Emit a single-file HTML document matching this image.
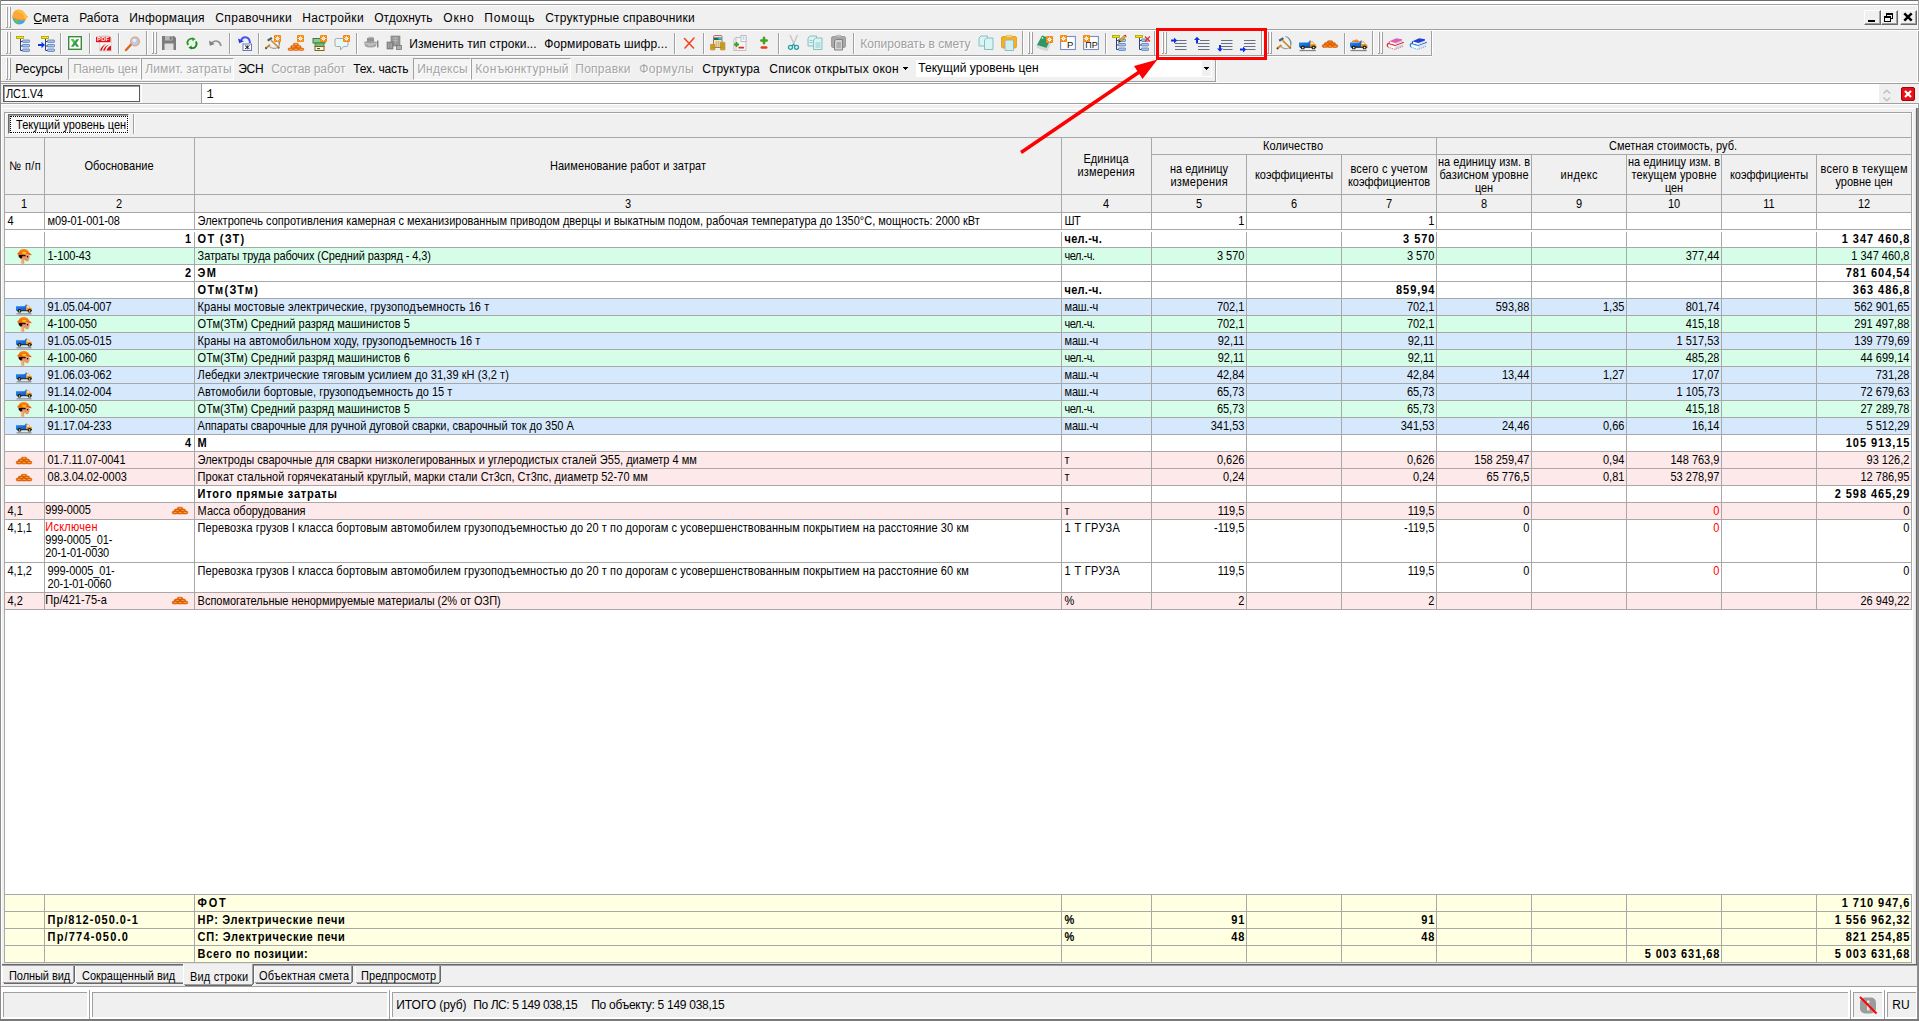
<!DOCTYPE html>
<html><head><meta charset="utf-8"><title>Смета</title>
<style>
html,body{margin:0;padding:0;}
html{overflow:hidden;width:1919px;height:1021px;}
body{width:1919px;height:1021px;overflow:hidden;background:#f0f0f0;position:relative;font-family:'Liberation Sans',sans-serif;}
body>div,body>svg{position:absolute;}
svg{overflow:visible;}
</style></head><body>
<div style="left:0px;top:0px;width:1919px;height:1px;background:#6d6d6d;"></div>
<div style="left:0px;top:1px;width:1919px;height:3px;background:#ffffff;"></div>
<div style="left:0px;top:4px;width:1919px;height:1px;background:#a0a0a0;"></div>
<div style="left:1px;top:5px;width:1917px;height:1px;background:#ffffff;"></div>
<div style="left:1917px;top:5px;width:1px;height:103px;background:#ffffff;"></div>
<div style="left:0px;top:0px;width:1px;height:1021px;background:#8c8c8c;"></div>
<div style="left:1px;top:5px;width:1px;height:1014px;background:#ffffff;"></div>
<div style="left:1918px;top:0px;width:1px;height:1021px;background:#a0a0a0;"></div>
<div style="left:1915px;top:108px;width:1px;height:856px;background:#e3e3e3;"></div>
<div style="left:1916px;top:108px;width:1px;height:858px;background:#696969;"></div>
<div style="left:1917px;top:108px;width:1px;height:912px;background:#909090;"></div>
<div style="left:1918px;top:108px;width:1px;height:912px;background:#888888;"></div>
<div style="left:0px;top:1019px;width:1919px;height:2px;background:#7a7a7a;"></div>
<div style="left:0px;top:29px;width:1919px;height:1px;background:#a0a0a0;"></div>
<div style="left:0px;top:30px;width:1919px;height:1px;background:#ffffff;"></div>
<div style="left:6px;top:7px;width:1px;height:20px;background:#ffffff;"></div>
<div style="left:7px;top:7px;width:1px;height:20px;background:#a0a0a0;"></div>
<div style="left:6px;top:27px;width:2px;height:1px;background:#a0a0a0;"></div>
<div style="left:9px;top:7px;width:1px;height:20px;background:#ffffff;"></div>
<div style="left:10px;top:7px;width:1px;height:20px;background:#a0a0a0;"></div>
<div style="left:9px;top:27px;width:2px;height:1px;background:#a0a0a0;"></div>
<svg style="left:12px;top:9px" width="17" height="17" viewBox="0 0 17 17"><circle cx="7.300" cy="8.700" r="6.700" fill="#40a8e8"/><path d="M2.300 10.500L6.800 11.200 5.800 15.200 3.300 13.800z" fill="#62c44a"/><path d="M.3 8.800C0 4 3 .5 6.500 .5 10.500 .5 13 3.500 13.800 6L16 7.500 13 11.300C9 11.600 4 10.800 .3 8.800z" fill="#f9a93a"/><path d="M3 2.400C5 .8 9 .5 11.500 3 12.500 4.200 13.500 6 13.800 6.800L16 7.500 13.500 10.600 12.300 8C11.300 4.800 8 2 3 2.400z" fill="#fcc636"/><path d="M.6 9C4 10.800 9 11.500 13 11.300L13.300 10.400C9 10.600 4 9.800 .5 8z" fill="#fb8c1c"/></svg>
<div style="top:11.84px;font-size:12px;line-height:12px;white-space:pre;letter-spacing:0.021px;left:33.28px;">Смета</div>
<div style="top:11.84px;font-size:12px;line-height:12px;white-space:pre;letter-spacing:-0.058px;left:79.28px;">Работа</div>
<div style="top:11.84px;font-size:12px;line-height:12px;white-space:pre;letter-spacing:0.204px;left:129.28px;">Информация</div>
<div style="top:11.84px;font-size:12px;line-height:12px;white-space:pre;letter-spacing:0.362px;left:215.28px;">Справочники</div>
<div style="top:11.84px;font-size:12px;line-height:12px;white-space:pre;letter-spacing:0.31px;left:302.28px;">Настройки</div>
<div style="top:11.84px;font-size:12px;line-height:12px;white-space:pre;letter-spacing:-0.005px;left:374.28px;">Отдохнуть</div>
<div style="top:11.84px;font-size:12px;line-height:12px;white-space:pre;letter-spacing:0.81px;left:443.28px;">Окно</div>
<div style="top:11.84px;font-size:12px;line-height:12px;white-space:pre;letter-spacing:0.792px;left:484.28px;">Помощь</div>
<div style="top:11.84px;font-size:12px;line-height:12px;white-space:pre;letter-spacing:0.172px;left:545.28px;">Структурные справочники</div>
<div style="left:34px;top:23px;width:8px;height:1px;background:#000;"></div>
<div style="left:1864px;top:10px;width:17px;height:15px;background:#f0f0f0;box-sizing:border-box;border-top:1px solid #fff;border-left:1px solid #fff;border-right:1px solid #696969;border-bottom:1px solid #696969;"></div>
<div style="left:1865px;top:11px;width:15px;height:13px;background:#f0f0f0;box-sizing:border-box;border-right:1px solid #a0a0a0;border-bottom:1px solid #a0a0a0;"></div>
<svg style="left:1864px;top:10px" width="16" height="14" viewBox="0 0 16 14"><rect x="4" y="10" width="7" height="2" fill="#000"/></svg>
<div style="left:1881px;top:10px;width:17px;height:15px;background:#f0f0f0;box-sizing:border-box;border-top:1px solid #fff;border-left:1px solid #fff;border-right:1px solid #696969;border-bottom:1px solid #696969;"></div>
<div style="left:1882px;top:11px;width:15px;height:13px;background:#f0f0f0;box-sizing:border-box;border-right:1px solid #a0a0a0;border-bottom:1px solid #a0a0a0;"></div>
<svg style="left:1881px;top:10px" width="16" height="14" viewBox="0 0 16 14"><path d="M5 3h7v6h-2v-1h1V5H6v1H5z" fill="#000"/><path d="M3 6h7v6H3zM4 8v3h5V8z" fill="#000" fill-rule="evenodd"/></svg>
<div style="left:1900px;top:10px;width:17px;height:15px;background:#f0f0f0;box-sizing:border-box;border-top:1px solid #fff;border-left:1px solid #fff;border-right:1px solid #696969;border-bottom:1px solid #696969;"></div>
<div style="left:1901px;top:11px;width:15px;height:13px;background:#f0f0f0;box-sizing:border-box;border-right:1px solid #a0a0a0;border-bottom:1px solid #a0a0a0;"></div>
<svg style="left:1900px;top:10px" width="16" height="14" viewBox="0 0 16 14"><path d="M4.300 3.300l7.400 7.400M11.700 3.300l-7.400 7.400" stroke="#000" stroke-width="2.400"/></svg>
<div style="left:0px;top:55px;width:1432px;height:1px;background:#a0a0a0;"></div>
<div style="left:0px;top:56px;width:1432px;height:1px;background:#ffffff;"></div>
<div style="left:6px;top:32px;width:1px;height:21px;background:#ffffff;"></div>
<div style="left:7px;top:32px;width:1px;height:21px;background:#a0a0a0;"></div>
<div style="left:6px;top:53px;width:2px;height:1px;background:#a0a0a0;"></div>
<div style="left:9px;top:32px;width:1px;height:21px;background:#ffffff;"></div>
<div style="left:10px;top:32px;width:1px;height:21px;background:#a0a0a0;"></div>
<div style="left:9px;top:53px;width:2px;height:1px;background:#a0a0a0;"></div>
<svg style="left:16px;top:36px" width="16" height="16" viewBox="0 0 16 16"><g transform="translate(0,0)"><rect x=".5" y=".5" width="7" height="2" fill="#f4e800" stroke="#a8a000" stroke-width=".8"/><path d="M4.500 3v11.500h2.500M4.500 5.500h2.500M4.500 10h2.500" fill="none" stroke="#304078" stroke-width="1"/><rect x="6.500" y="4" width="7" height="2.400" rx=".6" fill="#a8c8f4" stroke="#5878b0" stroke-width=".8"/><rect x="6.500" y="8.5" width="7" height="2.400" rx=".6" fill="#a8c8f4" stroke="#5878b0" stroke-width=".8"/><rect x="6.500" y="13" width="7" height="2.400" rx=".6" fill="#a8c8f4" stroke="#5878b0" stroke-width=".8"/></g></svg>
<svg style="left:38px;top:36px" width="16" height="16" viewBox="0 0 16 16"><g transform="translate(3,0)"><rect x=".5" y=".5" width="7" height="2" fill="#f4e800" stroke="#a8a000" stroke-width=".8"/><path d="M4.500 3v11.500h2.500M4.500 5.500h2.500M4.500 10h2.500" fill="none" stroke="#304078" stroke-width="1"/><rect x="6.500" y="4" width="7" height="2.400" rx=".6" fill="#a8c8f4" stroke="#5878b0" stroke-width=".8"/><rect x="6.500" y="8.5" width="7" height="2.400" rx=".6" fill="#a8c8f4" stroke="#5878b0" stroke-width=".8"/><rect x="6.500" y="13" width="7" height="2.400" rx=".6" fill="#a8c8f4" stroke="#5878b0" stroke-width=".8"/></g><path d="M0 8h3.500V5.800L7 9l-3.500 3.200V10H0z" fill="#0838e8"/></svg>
<div style="left:60px;top:33px;width:1px;height:21px;background:#a0a0a0;"></div>
<div style="left:61px;top:33px;width:1px;height:21px;background:#ffffff;"></div>
<svg style="left:68px;top:36px" width="14" height="14" viewBox="0 0 15 15"><rect x=".75" y=".75" width="13.500" height="13.500" fill="#fff" stroke="#3c8a3c" stroke-width="1.500"/><path d="M3 3.500h3l1.500 2.200L9 3.500h3L9 7.500l3 4H9L7.500 9.300 6 11.500H3l3-4z" fill="#2e9e3e"/><path d="M3 3.500h3l1.500 2.200-1.500 1.800z" fill="#5cc860"/></svg>
<div style="left:89px;top:33px;width:1px;height:21px;background:#a0a0a0;"></div>
<div style="left:90px;top:33px;width:1px;height:21px;background:#ffffff;"></div>
<svg style="left:96px;top:35px" width="16" height="16" viewBox="0 0 16 16"><path d="M3.500 1h9.500l2.500 2.500V16h-12z" fill="#f4f4f4" stroke="#c8c8c8" stroke-width=".6"/><rect x="0" y="1.800" width="14.500" height="5.400" fill="#e81010"/><text x="7.200" y="6.400" font-family="Liberation Sans" font-weight="bold" font-size="5.800" fill="#fff" text-anchor="middle" letter-spacing=".2">PDF</text><path d="M4 15.500c1-3 3-5.500 6-6.500-2.500 2-3.500 4-4 6.500zM7 15.500c1-3 3-5 6-6-2.500 2-3.500 3.500-4 6zM10.500 15.500c.5-2 2-4 4.500-5v5z" fill="#e01010"/></svg>
<div style="left:118px;top:33px;width:1px;height:21px;background:#a0a0a0;"></div>
<div style="left:119px;top:33px;width:1px;height:21px;background:#ffffff;"></div>
<svg style="left:125px;top:36px" width="15" height="15" viewBox="0 0 15 15"><path d="M1 14l5.500-6" stroke="#d86818" stroke-width="2.400" stroke-linecap="round"/><circle cx="10" cy="5.500" r="4.300" fill="#b8ccf0" stroke="#e8a070" stroke-width="1.300"/><circle cx="9.300" cy="4.500" r="1.800" fill="#e8f0ff"/></svg>
<div style="left:146px;top:31px;width:1px;height:24px;background:#a0a0a0;"></div>
<div style="left:147px;top:31px;width:1px;height:24px;background:#ffffff;"></div>
<div style="left:152px;top:32px;width:1px;height:21px;background:#ffffff;"></div>
<div style="left:153px;top:32px;width:1px;height:21px;background:#a0a0a0;"></div>
<div style="left:152px;top:53px;width:2px;height:1px;background:#a0a0a0;"></div>
<div style="left:155px;top:32px;width:1px;height:21px;background:#ffffff;"></div>
<div style="left:156px;top:32px;width:1px;height:21px;background:#a0a0a0;"></div>
<div style="left:155px;top:53px;width:2px;height:1px;background:#a0a0a0;"></div>
<svg style="left:162px;top:36px" width="14" height="14" viewBox="0 0 14 14"><path d="M0 0h12l2 2v12H0z" fill="#7c7c7c"/><rect x="2.500" y="7.500" width="9" height="6.500" fill="#e0e0e0"/><rect x="3" y="0" width="7.500" height="4.500" fill="#b8b8b8"/><rect x="7.800" y=".8" width="1.700" height="2.800" fill="#6c6c6c"/></svg>
<svg style="left:185px;top:37px" width="14" height="13" viewBox="-.5 -1 15.500 17"><path d="M2.300 9.500A5.300 5.300 0 0 1 9 1.700" fill="none" stroke="#1ea01e" stroke-width="2.300"/><path d="M7.500 -.8l4.500 2.300-4 3z" fill="#1ea01e"/><path d="M12.200 5A5.300 5.300 0 0 1 5.500 12.800" fill="none" stroke="#148c14" stroke-width="2.300"/><path d="M7 15.300l-4.500-2.300 4-3z" fill="#148c14"/></svg>
<svg style="left:209px;top:39px" width="13" height="8" viewBox="0 0 13 8"><path d="M2.500 4C6.500 .5 11 2 12 7" fill="none" stroke="#909090" stroke-width="1.600"/><path d="M0 1.500l.8 5.200L5.800 5z" fill="#808080"/></svg>
<div style="left:229px;top:33px;width:1px;height:21px;background:#a0a0a0;"></div>
<div style="left:230px;top:33px;width:1px;height:21px;background:#ffffff;"></div>
<svg style="left:238px;top:35px" width="16" height="16" viewBox="0 0 16 16"><path d="M3 5.500C4.500 1 11.500 .5 12 8" fill="none" stroke="#4858e8" stroke-width="2"/><path d="M0 3.500l1.200 4.800L6 6.300z" fill="#2838e0"/><rect x="5" y="9" width="8.500" height="6.500" fill="#fff" stroke="#6878c0" stroke-width="1"/><path d="M7 10.500l4.500 3.500M11.500 10.500L7 14M9.250 10.300v4" stroke="#101020" stroke-width=".9"/></svg>
<div style="left:258px;top:33px;width:1px;height:21px;background:#a0a0a0;"></div>
<div style="left:259px;top:33px;width:1px;height:21px;background:#ffffff;"></div>
<svg style="left:265px;top:35px" width="16" height="16" viewBox="0 0 16 16"><g transform="translate(-.5,.8)"><path d="M9.500 .4C13 1.500 15.500 5 15 8.500 14.500 11 12 12.800 9 12.600 7 12.400 5.500 11.500 4.500 10.200" fill="none" stroke="#8aa8ac" stroke-width="1.200"/><path d="M12 1.800C14 3.500 15 6 14.600 8.500" fill="none" stroke="#5c7478" stroke-width=".7"/><path d="M1.300 12.500l3.600-3" stroke="#d08828" stroke-width="1.900" stroke-linecap="round"/><path d="M1.200 12.700l.8-.7" stroke="#503010" stroke-width="1.900"/><path d="M6.500 4.400l8 7.700" stroke="#d08828" stroke-width="1.500"/><path d="M13.800 11.500l1 1" stroke="#b06010" stroke-width="1.800"/><path d="M3.200 4.800l4.200-2.700" stroke="#4a6068" stroke-width="2.300"/></g><rect x="9" y="0" width="7" height="7" rx="1" fill="#f08810"/><circle cx="12.500" cy="3.500" r="1.500" fill="#fff"/><path d="M12.500 .8v5.400M9.800 3.500h5.400M10.600 1.600l3.800 3.800M14.400 1.600l-3.800 3.800" stroke="#fff" stroke-width=".7"/><circle cx="12.500" cy="3.500" r=".8" fill="#f8c070"/></svg>
<svg style="left:288px;top:35px" width="16" height="16" viewBox="0 0 16 16"><rect x="5.2" y="8.2" width="5.400" height="2.600" rx="1.300" fill="#f07008" stroke="#c85000" stroke-width=".4"/><rect x="6.7" y="9.1" width="2.600" height=".7" fill="#ffb868"/><rect x="2.6" y="10.6" width="5.400" height="2.600" rx="1.300" fill="#f07008" stroke="#c85000" stroke-width=".4"/><rect x="4.1" y="11.5" width="2.600" height=".7" fill="#ffb868"/><rect x="7.8" y="10.6" width="5.400" height="2.600" rx="1.300" fill="#f07008" stroke="#c85000" stroke-width=".4"/><rect x="9.3" y="11.5" width="2.600" height=".7" fill="#ffb868"/><rect x="0" y="13" width="5.400" height="2.600" rx="1.300" fill="#f07008" stroke="#c85000" stroke-width=".4"/><rect x="1.5" y="13.9" width="2.600" height=".7" fill="#ffb868"/><rect x="5.2" y="13" width="5.400" height="2.600" rx="1.300" fill="#f07008" stroke="#c85000" stroke-width=".4"/><rect x="6.7" y="13.9" width="2.600" height=".7" fill="#ffb868"/><rect x="10.4" y="13" width="5.400" height="2.600" rx="1.300" fill="#f07008" stroke="#c85000" stroke-width=".4"/><rect x="11.9" y="13.9" width="2.600" height=".7" fill="#ffb868"/><rect x="9" y="0" width="7" height="7" rx="1" fill="#f08810"/><circle cx="12.500" cy="3.500" r="1.500" fill="#fff"/><path d="M12.500 .8v5.400M9.800 3.500h5.400M10.600 1.600l3.800 3.800M14.400 1.600l-3.800 3.800" stroke="#fff" stroke-width=".7"/><circle cx="12.500" cy="3.500" r=".8" fill="#f8c070"/></svg>
<svg style="left:311px;top:35px" width="16" height="16" viewBox="0 0 16 16"><rect x="2" y="3.500" width="12" height="4.500" fill="#90c890" stroke="#3c8040" stroke-width="1"/><rect x="4" y="8" width="9" height="3.500" fill="#78b878" stroke="#3c8040" stroke-width=".8"/><rect x="4" y="11.500" width="9" height="4" fill="#fff8d8" stroke="#806020" stroke-width="1"/><rect x="6" y="13" width="3" height="1.200" rx=".6" fill="#206020"/><rect x="9" y="0" width="7" height="7" rx="1" fill="#f08810"/><circle cx="12.500" cy="3.500" r="1.500" fill="#fff"/><path d="M12.500 .8v5.400M9.800 3.500h5.400M10.600 1.600l3.800 3.800M14.400 1.600l-3.800 3.800" stroke="#fff" stroke-width=".7"/><circle cx="12.500" cy="3.500" r=".8" fill="#f8c070"/></svg>
<svg style="left:334px;top:35px" width="16" height="16" viewBox="0 0 16 16"><path d="M2.500 3.500h10a1.500 1.500 0 0 1 1.500 1.500v5a1.500 1.500 0 0 1-1.500 1.500H9.500L6.500 15v-3.500h-4A1.500 1.500 0 0 1 1 10V5a1.500 1.500 0 0 1 1.500-1.500z" fill="#e4f8fc" stroke="#a8a8a8" stroke-width="1"/><rect x="9" y="0" width="7" height="7" rx="1" fill="#f08810"/><circle cx="12.500" cy="3.500" r="1.500" fill="#fff"/><path d="M12.500 .8v5.400M9.800 3.500h5.400M10.600 1.600l3.800 3.800M14.400 1.600l-3.800 3.800" stroke="#fff" stroke-width=".7"/><circle cx="12.500" cy="3.500" r=".8" fill="#f8c070"/></svg>
<div style="left:356px;top:33px;width:1px;height:21px;background:#a0a0a0;"></div>
<div style="left:357px;top:33px;width:1px;height:21px;background:#ffffff;"></div>
<svg style="left:363px;top:35px" width="16" height="16" viewBox="0 0 16 16"><path d="M1 7c2-1.500 10-1.500 13 0l-1 4c-2 2-9 2-11 0z" fill="#a4a4a4"/><rect x="4" y="3" width="7" height="3.500" fill="#909090"/><rect x="5.500" y="1.800" width="5" height="1.500" fill="#b4b4b4"/><path d="M2.500 8.500c2 1 8 1 10 0" stroke="#d8d8d8" stroke-width="1" fill="none"/><rect x="14.300" y="5.500" width="1" height="7" fill="#505050"/><rect x="5" y="9.500" width="5" height="1" fill="#c8c8c8"/></svg>
<svg style="left:386px;top:35px" width="16" height="16" viewBox="0 0 16 16"><rect x="5" y="1" width="9" height="10" fill="#989898" stroke="#787878" stroke-width=".6"/><path d="M7 3h5M9.500 3v5M7.500 5.500h4" stroke="#c0c0c0" stroke-width=".8"/><rect x="1" y="7" width="6" height="7" fill="#8c8c8c" stroke="#707070" stroke-width=".6"/><path d="M2.500 8v5M4 8v5M5.500 8v5" stroke="#b4b4b4" stroke-width=".6"/><rect x="10.500" y="10.500" width="5" height="4" fill="#b0b0b0" stroke="#787878" stroke-width=".8"/></svg>
<div style="top:37.84px;font-size:12px;line-height:12px;white-space:pre;letter-spacing:0.049px;left:409.28px;">Изменить тип строки...</div>
<div style="top:37.84px;font-size:12px;line-height:12px;white-space:pre;letter-spacing:0.107px;left:544.28px;">Формировать шифр...</div>
<div style="left:674px;top:33px;width:1px;height:21px;background:#a0a0a0;"></div>
<div style="left:675px;top:33px;width:1px;height:21px;background:#ffffff;"></div>
<svg style="left:683px;top:37px" width="12" height="12" viewBox="0 0 12 12"><path d="M1.500 1.500l9 9.500M11 1L2 11" stroke="#f04828" stroke-width="1.600" stroke-linecap="round"/></svg>
<div style="left:703px;top:33px;width:1px;height:21px;background:#a0a0a0;"></div>
<div style="left:704px;top:33px;width:1px;height:21px;background:#ffffff;"></div>
<svg style="left:710px;top:35px" width="16" height="16" viewBox="0 0 16 16"><rect x="3.500" y=".5" width="8.500" height="12" rx="1" fill="#f4e8c8" stroke="#b07070" stroke-width="1"/><rect x="4" y="2.500" width="7.500" height="2.500" fill="#186868"/><rect x="8.500" y="3" width="3" height="1.500" fill="#30d0e0"/><path d="M5 7h6M5 9h6M5 11h6M6.500 6v6M8.500 6v6" stroke="#c8a860" stroke-width=".6"/><g fill="#e8b820" stroke="#906800" stroke-width=".5"><rect x=".3" y="9.300" width="4.800" height="1.800" rx=".8"/><rect x=".3" y="11.200" width="4.800" height="1.800" rx=".8"/><rect x=".3" y="13.100" width="4.800" height="1.800" rx=".8"/><rect x="10.300" y="7.400" width="4.800" height="1.800" rx=".8"/><rect x="10.300" y="9.300" width="4.800" height="1.800" rx=".8"/><rect x="10.300" y="11.200" width="4.800" height="1.800" rx=".8"/><rect x="10.300" y="13.100" width="4.800" height="1.800" rx=".8"/></g></svg>
<svg style="left:733px;top:35px" width="16" height="16" viewBox="0 0 16 16"><path d="M3 2.500h5v13H.8V5z" fill="#f4f4f4" stroke="#b8b8b8" stroke-width=".8"/><rect x="3" y="2.500" width="10" height="13" fill="#f4f4f4" stroke="#b8b8b8" stroke-width=".8"/><rect x="8" y=".5" width="5" height="6" fill="#fff" stroke="#b0b0b0" stroke-width=".8"/><path d="M9.500 2.200h2M9.500 4h2" stroke="#80a0f0" stroke-width=".8"/><path d="M1 9.500h5M3.500 7v5" stroke="#38a028" stroke-width="1.800"/><rect x="5.500" y="11.800" width="5.500" height="1.800" rx=".5" fill="#e82818"/></svg>
<svg style="left:759px;top:36px" width="10" height="14" viewBox="0 0 10 14"><path d="M2.300 4.500h5.400M5 1.800v5.400" stroke="#48a020" stroke-width="2.600" stroke-linecap="round"/><rect x="1.500" y="10.200" width="7" height="2.600" rx="1.300" fill="#f03818"/></svg>
<div style="left:778px;top:33px;width:1px;height:21px;background:#a0a0a0;"></div>
<div style="left:779px;top:33px;width:1px;height:21px;background:#ffffff;"></div>
<svg style="left:786px;top:35px" width="15" height="15" viewBox="0 0 15 15"><path d="M4 0l4.500 10M11.500 0L7 10" stroke="#c0c4c4" stroke-width="1.300"/><circle cx="4.500" cy="12.300" r="2" fill="none" stroke="#20a0a8" stroke-width="1.300"/><circle cx="10.500" cy="12.300" r="2" fill="none" stroke="#20a0a8" stroke-width="1.300"/><path d="M6 10.800l1.500-1.500 1.500 1.500" stroke="#20a0a8" stroke-width="1.200" fill="none"/></svg>
<svg style="left:807px;top:35px" width="16" height="16" viewBox="0 0 16 16"><path d="M1 3l2-2h6.500v10H1z" fill="#d8f4f4" stroke="#88c0c0" stroke-width="1"/><path d="M6.500 5l2-2h6.500v11.500H6.500z" fill="#d8f4f4" stroke="#88c0c0" stroke-width="1"/><path d="M8.500 8h5M8.500 10h5M8.500 12h5M2.500 5.500h3M2.500 7.500h3" stroke="#88c0c0" stroke-width=".8"/></svg>
<svg style="left:831px;top:35px" width="16" height="16" viewBox="0 0 16 16"><rect x=".5" y="1.500" width="14" height="11" rx="1.500" fill="#a8a8a8" stroke="#909090" stroke-width=".8"/><rect x="5" y=".3" width="5" height="2" rx=".8" fill="#c8c8c8" stroke="#909090" stroke-width=".5"/><path d="M3.500 6l1.500-1.500h6.500v10.500H3.500z" fill="#d4d4d4" stroke="#787878" stroke-width=".9"/><path d="M5.500 8h4.500M5.500 10h4.500M5.500 12h4.500" stroke="#787878" stroke-width=".8"/></svg>
<div style="left:853px;top:33px;width:1px;height:21px;background:#a0a0a0;"></div>
<div style="left:854px;top:33px;width:1px;height:21px;background:#ffffff;"></div>
<div style="top:37.84px;font-size:12px;line-height:12px;white-space:pre;color:#a0a0a0;letter-spacing:0.03px;left:860.28px;text-shadow:1px 1px 0 #fff;">Копировать в смету</div>
<svg style="left:978px;top:35px" width="16" height="16" viewBox="0 0 16 16"><path d="M1 3l2-2h6.500v10H1z" fill="#d8f4f4" stroke="#88c0c0" stroke-width="1"/><path d="M6.500 5l2-2h6.500v11.500H6.500z" fill="#d8f4f4" stroke="#88c0c0" stroke-width="1"/></svg>
<svg style="left:1001px;top:35px" width="16" height="16" viewBox="0 0 16 16"><rect x=".5" y="1.500" width="15" height="11.500" rx="1.500" fill="#f8b020" stroke="#e09818" stroke-width=".8"/><rect x="5" y=".3" width="6" height="2" rx=".9" fill="#f8e078" stroke="#d8a828" stroke-width=".5"/><path d="M4 6.500l1.500-1.500h7v10.500H4z" fill="#d0eef0" stroke="#88b8c0" stroke-width=".9"/></svg>
<div style="left:1022px;top:31px;width:1px;height:24px;background:#a0a0a0;"></div>
<div style="left:1023px;top:31px;width:1px;height:24px;background:#ffffff;"></div>
<div style="left:1028px;top:32px;width:1px;height:21px;background:#ffffff;"></div>
<div style="left:1029px;top:32px;width:1px;height:21px;background:#a0a0a0;"></div>
<div style="left:1028px;top:53px;width:2px;height:1px;background:#a0a0a0;"></div>
<div style="left:1031px;top:32px;width:1px;height:21px;background:#ffffff;"></div>
<div style="left:1032px;top:32px;width:1px;height:21px;background:#a0a0a0;"></div>
<div style="left:1031px;top:53px;width:2px;height:1px;background:#a0a0a0;"></div>
<svg style="left:1037px;top:35px" width="16" height="16" viewBox="0 0 16 16"><path d="M0 10l5-9.500 9 3-4.500 9.500z" fill="#2e9860"/><path d="M0 10l9.500 3 4.500-9.500" fill="none" stroke="#207848" stroke-width=".6"/><path d="M0 10l.3 2.500 9.700 3.300 4.500-9.300-.5-3-4.500 9.500z" fill="#d4dce0" stroke="#a8b8c0" stroke-width=".4"/><circle cx="5.500" cy="3" r=".9" fill="#c0f0d0"/><g transform="translate(0,1)"><rect x="9" y="0" width="7" height="7" rx="1" fill="#f08810"/><circle cx="12.500" cy="3.500" r="1.500" fill="#fff"/><path d="M12.500 .8v5.400M9.800 3.500h5.400M10.600 1.600l3.800 3.800M14.400 1.600l-3.800 3.800" stroke="#fff" stroke-width=".7"/><circle cx="12.500" cy="3.500" r=".8" fill="#f8c070"/></g></svg>
<svg style="left:1060px;top:35px" width="16" height="16" viewBox="0 0 16 16"><rect x=".6" y="1.500" width="14.800" height="13" fill="#fff" stroke="#7890c0" stroke-width="1.100"/><text x="7" y="13" font-family="Liberation Sans" font-size="9.5" fill="#101010">P</text><g transform="translate(-9,0)"><rect x="9" y="0" width="7" height="7" rx="1" fill="#f08810"/><circle cx="12.500" cy="3.500" r="1.500" fill="#fff"/><path d="M12.500 .8v5.400M9.800 3.500h5.400M10.600 1.600l3.800 3.800M14.400 1.600l-3.800 3.800" stroke="#fff" stroke-width=".7"/><circle cx="12.500" cy="3.500" r=".8" fill="#f8c070"/></g></svg>
<svg style="left:1083px;top:35px" width="16" height="16" viewBox="0 0 16 16"><rect x=".6" y="1.500" width="14.800" height="13" fill="#fff" stroke="#7890c0" stroke-width="1.100"/><text x="2.3" y="13" font-family="Liberation Sans" font-size="9" fill="#101010">ПР</text><g transform="translate(-9,0)"><rect x="9" y="0" width="7" height="7" rx="1" fill="#f08810"/><circle cx="12.500" cy="3.500" r="1.500" fill="#fff"/><path d="M12.500 .8v5.400M9.800 3.500h5.400M10.600 1.600l3.800 3.800M14.400 1.600l-3.800 3.800" stroke="#fff" stroke-width=".7"/><circle cx="12.500" cy="3.500" r=".8" fill="#f8c070"/></g></svg>
<div style="left:1105px;top:33px;width:1px;height:21px;background:#a0a0a0;"></div>
<div style="left:1106px;top:33px;width:1px;height:21px;background:#ffffff;"></div>
<svg style="left:1112px;top:35px" width="16" height="16" viewBox="0 0 16 16"><g transform="translate(0,0)"><rect x=".5" y=".5" width="7" height="2" fill="#f4e800" stroke="#a8a000" stroke-width=".8"/><path d="M4.500 3v11.500h2.500M4.500 5.500h2.500M4.500 10h2.500" fill="none" stroke="#304078" stroke-width="1"/><rect x="6.500" y="4" width="7" height="2.400" rx=".6" fill="#a8c8f4" stroke="#5878b0" stroke-width=".8"/><rect x="6.500" y="8.5" width="7" height="2.400" rx=".6" fill="#a8c8f4" stroke="#5878b0" stroke-width=".8"/><rect x="6.500" y="13" width="7" height="2.400" rx=".6" fill="#a8c8f4" stroke="#5878b0" stroke-width=".8"/></g><path d="M6.500 7.500l1-2.500 5-5 1.500 1.500-5 5z" fill="#f0b030" stroke="#604010" stroke-width=".5"/><path d="M12.300.2l1.500 1.500 .8-.8-1.500-1.500z" fill="#e02020"/><path d="M6.500 7.500l1-2.400 1.400 1.400z" fill="#202020"/></svg>
<svg style="left:1135px;top:35px" width="16" height="16" viewBox="0 0 16 16"><g transform="translate(0,0)"><rect x=".5" y=".5" width="7" height="2" fill="#f4e800" stroke="#a8a000" stroke-width=".8"/><path d="M4.500 3v11.500h2.500M4.500 5.500h2.500M4.500 10h2.500" fill="none" stroke="#304078" stroke-width="1"/><rect x="6.500" y="4" width="7" height="2.400" rx=".6" fill="#a8c8f4" stroke="#5878b0" stroke-width=".8"/><rect x="6.500" y="8.5" width="7" height="2.400" rx=".6" fill="#a8c8f4" stroke="#5878b0" stroke-width=".8"/><rect x="6.500" y="13" width="7" height="2.400" rx=".6" fill="#a8c8f4" stroke="#5878b0" stroke-width=".8"/></g><path d="M10 1.500l5 5M15 1.500l-5 5" stroke="#e83030" stroke-width="1.300"/></svg>
<div style="left:1154px;top:31px;width:1px;height:24px;background:#a0a0a0;"></div>
<div style="left:1155px;top:31px;width:1px;height:24px;background:#ffffff;"></div>
<div style="left:1162px;top:32px;width:1px;height:21px;background:#ffffff;"></div>
<div style="left:1163px;top:32px;width:1px;height:21px;background:#a0a0a0;"></div>
<div style="left:1162px;top:53px;width:2px;height:1px;background:#a0a0a0;"></div>
<div style="left:1165px;top:32px;width:1px;height:21px;background:#ffffff;"></div>
<div style="left:1166px;top:32px;width:1px;height:21px;background:#a0a0a0;"></div>
<div style="left:1165px;top:53px;width:2px;height:1px;background:#a0a0a0;"></div>
<svg style="left:1170px;top:36px" width="17" height="16" viewBox="0 0 17 16"><path d="M7 4.500h9.500M5 7.500h11.5M5 10.500h11.5M5 13.500h11.5" stroke="#687088" stroke-width="1" fill="none"/><path d="M1 3.500h3V1.500L7.200 4.500 4 7.500v-2H1z" fill="#1030e0"/></svg>
<svg style="left:1193px;top:36px" width="17" height="16" viewBox="0 0 17 16"><path d="M7 4.500h9.500M5 7.500h11.5M5 10.500h11.5M5 13.500h11.5" stroke="#687088" stroke-width="1" fill="none"/><path d="M3 7.500V4H1L4 .800 7 4H5v3.500z" fill="#1030e0"/></svg>
<svg style="left:1216px;top:36px" width="17" height="16" viewBox="0 0 17 16"><path d="M5 4.500h11.5M5 7.500h11.5M5 10.500h11.5M7 13.500h9.500" stroke="#687088" stroke-width="1" fill="none"/><path d="M3 9v3.500H1L4 15.700 7 12.500H5V9z" fill="#1030e0"/></svg>
<svg style="left:1239px;top:36px" width="17" height="16" viewBox="0 0 17 16"><path d="M5 4.500h11.5M5 7.500h11.5M5 10.500h11.5M7 13.500h9.500" stroke="#687088" stroke-width="1" fill="none"/><path d="M1 12.500h3v-2l3.200 3-3.200 3v-2H1z" fill="#1030e0"/></svg>
<div style="left:1261px;top:31px;width:1px;height:24px;background:#a0a0a0;"></div>
<div style="left:1262px;top:31px;width:1px;height:24px;background:#ffffff;"></div>
<div style="left:1267px;top:32px;width:1px;height:21px;background:#ffffff;"></div>
<div style="left:1268px;top:32px;width:1px;height:21px;background:#a0a0a0;"></div>
<div style="left:1267px;top:53px;width:2px;height:1px;background:#a0a0a0;"></div>
<div style="left:1270px;top:32px;width:1px;height:21px;background:#ffffff;"></div>
<div style="left:1271px;top:32px;width:1px;height:21px;background:#a0a0a0;"></div>
<div style="left:1270px;top:53px;width:2px;height:1px;background:#a0a0a0;"></div>
<svg style="left:1276px;top:36px" width="16" height="16" viewBox="0 0 16 16"><path d="M9.500 .4C13 1.500 15.500 5 15 8.500 14.500 11 12 12.800 9 12.600 7 12.400 5.500 11.500 4.500 10.200" fill="none" stroke="#8aa8ac" stroke-width="1.200"/><path d="M12 1.800C14 3.500 15 6 14.600 8.500" fill="none" stroke="#5c7478" stroke-width=".7"/><path d="M1.300 12.500l3.600-3" stroke="#d08828" stroke-width="1.900" stroke-linecap="round"/><path d="M1.200 12.700l.8-.7" stroke="#503010" stroke-width="1.900"/><path d="M6.500 4.400l8 7.700" stroke="#d08828" stroke-width="1.500"/><path d="M13.800 11.500l1 1" stroke="#b06010" stroke-width="1.800"/><path d="M3.200 4.800l4.200-2.700" stroke="#4a6068" stroke-width="2.300"/></svg>
<svg style="left:1299px;top:36px" width="17" height="16" viewBox="0 0 17 16"><g transform="translate(0,4) scale(1.08)"><defs><linearGradient id="tb2" x1="0" y1="0" x2="1" y2="1"><stop offset="0" stop-color="#2a8cf0"/><stop offset="1" stop-color="#0c56c8"/></linearGradient></defs><path d="M0 2.200h8.500L10 .4l1.200.3-.9 1.700v4.400H0z" fill="url(#tb2)"/><path d="M10.300 1.500h2.600l1.500 2.300 1.600.6v2.400h-5.700z" fill="#f0901c"/><path d="M11.100 2.300h1.700l.9 1.400h-2.600z" fill="#e8ffff"/><rect x="1" y="6.200" width="15" height="1" fill="#202020"/><circle cx="3.500" cy="7" r="1.900" fill="#181818"/><circle cx="3.500" cy="7" r=".8" fill="#f0e878"/><circle cx="13.500" cy="7" r="1.900" fill="#181818"/><circle cx="13.500" cy="7" r=".8" fill="#f0e878"/><rect x="2" y="8.500" width="3" height="1" fill="#c0c4c8"/><rect x="12" y="8.500" width="3" height="1" fill="#c0c4c8"/><rect x=".5" y="9.500" width="15" height=".8" fill="#606060"/></g></svg>
<svg style="left:1322px;top:35px" width="16" height="16" viewBox="0 0 16 16"><g transform="translate(0,5.500)"><rect x="5.2" y="0.2" width="5.600" height="2.900" rx="1.400" fill="#ee6a00" stroke="#c04c00" stroke-width=".5"/><rect x="6.800000000000001" y="1.3" width="3" height=".8" rx=".4" fill="#ffb050"/><rect x="2.3" y="2.1" width="5.600" height="2.900" rx="1.400" fill="#ee6a00" stroke="#c04c00" stroke-width=".5"/><rect x="3.9" y="3.2" width="3" height=".8" rx=".4" fill="#ffb050"/><rect x="7.9" y="2.1" width="5.600" height="2.900" rx="1.400" fill="#ee6a00" stroke="#c04c00" stroke-width=".5"/><rect x="9.5" y="3.2" width="3" height=".8" rx=".4" fill="#ffb050"/><rect x="0.2" y="4.1" width="5.600" height="2.900" rx="1.400" fill="#ee6a00" stroke="#c04c00" stroke-width=".5"/><rect x="1.8" y="5.199999999999999" width="3" height=".8" rx=".4" fill="#ffb050"/><rect x="5.2" y="4.1" width="5.600" height="2.900" rx="1.400" fill="#ee6a00" stroke="#c04c00" stroke-width=".5"/><rect x="6.800000000000001" y="5.199999999999999" width="3" height=".8" rx=".4" fill="#ffb050"/><rect x="10.2" y="4.1" width="5.600" height="2.900" rx="1.400" fill="#ee6a00" stroke="#c04c00" stroke-width=".5"/><rect x="11.799999999999999" y="5.199999999999999" width="3" height=".8" rx=".4" fill="#ffb050"/></g></svg>
<div style="left:1344px;top:33px;width:1px;height:21px;background:#a0a0a0;"></div>
<div style="left:1345px;top:33px;width:1px;height:21px;background:#ffffff;"></div>
<svg style="left:1350px;top:36px" width="17" height="16" viewBox="0 0 17 16"><g transform="translate(0,4) scale(1.08)"><defs><linearGradient id="tb3" x1="0" y1="0" x2="1" y2="1"><stop offset="0" stop-color="#2a8cf0"/><stop offset="1" stop-color="#0c56c8"/></linearGradient></defs><path d="M0 2.200h8.500L10 .4l1.200.3-.9 1.700v4.400H0z" fill="url(#tb3)"/><path d="M10.300 1.500h2.600l1.500 2.300 1.600.6v2.400h-5.700z" fill="#f0901c"/><path d="M11.100 2.300h1.700l.9 1.400h-2.600z" fill="#e8ffff"/><rect x="1" y="6.200" width="15" height="1" fill="#202020"/><circle cx="3.500" cy="7" r="1.900" fill="#181818"/><circle cx="3.500" cy="7" r=".8" fill="#f0e878"/><circle cx="13.500" cy="7" r="1.900" fill="#181818"/><circle cx="13.500" cy="7" r=".8" fill="#f0e878"/><rect x="2" y="8.500" width="3" height="1" fill="#c0c4c8"/><rect x="12" y="8.500" width="3" height="1" fill="#c0c4c8"/><rect x=".5" y="9.500" width="15" height=".8" fill="#606060"/></g><path d="M1.500 6c1-2 6-3 8.500 0z" fill="#e87818"/><circle cx="4" cy="4.800" r="1" fill="#f8a040"/><circle cx="6.500" cy="4.300" r="1" fill="#f09030"/></svg>
<div style="left:1372px;top:31px;width:1px;height:24px;background:#a0a0a0;"></div>
<div style="left:1373px;top:31px;width:1px;height:24px;background:#ffffff;"></div>
<div style="left:1378px;top:32px;width:1px;height:21px;background:#ffffff;"></div>
<div style="left:1379px;top:32px;width:1px;height:21px;background:#a0a0a0;"></div>
<div style="left:1378px;top:53px;width:2px;height:1px;background:#a0a0a0;"></div>
<div style="left:1381px;top:32px;width:1px;height:21px;background:#ffffff;"></div>
<div style="left:1382px;top:32px;width:1px;height:21px;background:#a0a0a0;"></div>
<div style="left:1381px;top:53px;width:2px;height:1px;background:#a0a0a0;"></div>
<svg style="left:1387px;top:38px" width="17" height="12" viewBox="0 0 17 12"><path d="M1 6.800L8 9l8.200-3v2L8 11 1 8.800z" fill="#fff"/><path d="M8 9l8.200-3v2L8 11z" fill="#c8d8e8"/><path d="M1 9.200L8 11.400l8.200-3.100" fill="none" stroke="#f07070" stroke-width="1" stroke-dasharray="1.300 .8"/><path d="M.7 8.600C0 7 .3 5.600 1.500 5.400L8 7.400l8.300-3" fill="none" stroke="#e83030" stroke-width="1.300" stroke-linecap="round"/><path d="M3 3.500L8.300 5l6.700-2.500v1.800L8.300 6.800 3 5.200z" fill="#fff"/><path d="M8.300 5l6.700-2.500v1.800L8.300 6.800z" fill="#c8d8e8"/><path d="M1.900 3.600L9.200.2 15 1.200v1.300L8.300 5 3 3.500v1.700l-1.100-.3z" fill="#e060b0"/></svg>
<svg style="left:1410px;top:38px" width="17" height="12" viewBox="0 0 17 12"><path d="M1 6.800L8 9l8.200-3v2L8 11 1 8.800z" fill="#fff"/><path d="M8 9l8.200-3v2L8 11z" fill="#f0d8e0"/><path d="M1 9.200L8 11.400l8.200-3.100" fill="none" stroke="#60b8f0" stroke-width="1" stroke-dasharray="1.300 .8"/><path d="M.7 8.600C0 7 .3 5.600 1.500 5.400L8 7.400l8.300-3" fill="none" stroke="#1090e0" stroke-width="1.300" stroke-linecap="round"/><path d="M3 3.500L8.300 5l6.700-2.500v1.800L8.300 6.800 3 5.200z" fill="#fff"/><path d="M8.300 5l6.700-2.500v1.800L8.300 6.800z" fill="#f0d8e0"/><path d="M1.900 3.600L9.200.2 15 1.200v1.300L8.300 5 3 3.500v1.700l-1.100-.3z" fill="#2040d0"/></svg>
<div style="left:1431px;top:31px;width:1px;height:24px;background:#a0a0a0;"></div>
<div style="left:1432px;top:31px;width:1px;height:24px;background:#ffffff;"></div>
<div style="left:0px;top:81px;width:1216px;height:1px;background:#a0a0a0;"></div>
<div style="left:0px;top:82px;width:1919px;height:1px;background:#ffffff;"></div>
<div style="left:6px;top:58px;width:1px;height:21px;background:#ffffff;"></div>
<div style="left:7px;top:58px;width:1px;height:21px;background:#a0a0a0;"></div>
<div style="left:6px;top:79px;width:2px;height:1px;background:#a0a0a0;"></div>
<div style="left:9px;top:58px;width:1px;height:21px;background:#ffffff;"></div>
<div style="left:10px;top:58px;width:1px;height:21px;background:#a0a0a0;"></div>
<div style="left:9px;top:79px;width:2px;height:1px;background:#a0a0a0;"></div>
<div style="top:62.84px;font-size:12px;line-height:12px;white-space:pre;letter-spacing:-0.001px;left:15.28px;">Ресурсы</div>
<div style="left:68px;top:58px;width:73px;height:22px;background:#f4f4f4;box-sizing:border-box;border-top:1px solid #a0a0a0;border-left:1px solid #a0a0a0;border-right:1px solid #fff;border-bottom:1px solid #fff;"></div>
<div style="top:62.84px;font-size:12px;line-height:12px;white-space:pre;color:#a4a4a4;letter-spacing:-0.056px;left:73.28px;text-shadow:1px 1px 0 #fff;">Панель цен</div>
<div style="left:141px;top:58px;width:93px;height:22px;background:#f4f4f4;box-sizing:border-box;border-top:1px solid #a0a0a0;border-left:1px solid #a0a0a0;border-right:1px solid #fff;border-bottom:1px solid #fff;"></div>
<div style="top:62.84px;font-size:12px;line-height:12px;white-space:pre;color:#a4a4a4;letter-spacing:0.103px;left:145.28px;text-shadow:1px 1px 0 #fff;">Лимит. затраты</div>
<div style="top:62.84px;font-size:12px;line-height:12px;white-space:pre;letter-spacing:-0.324px;left:238.28px;">ЭСН</div>
<div style="top:62.84px;font-size:12px;line-height:12px;white-space:pre;color:#a4a4a4;letter-spacing:-0.082px;left:271.28px;text-shadow:1px 1px 0 #fff;">Состав работ</div>
<div style="top:62.84px;font-size:12px;line-height:12px;white-space:pre;letter-spacing:-0.122px;left:353.28px;">Тех. часть</div>
<div style="left:413px;top:58px;width:58px;height:22px;background:#f4f4f4;box-sizing:border-box;border-top:1px solid #a0a0a0;border-left:1px solid #a0a0a0;border-right:1px solid #fff;border-bottom:1px solid #fff;"></div>
<div style="top:62.84px;font-size:12px;line-height:12px;white-space:pre;color:#a4a4a4;letter-spacing:0.23px;left:417.28px;text-shadow:1px 1px 0 #fff;">Индексы</div>
<div style="left:471px;top:58px;width:100px;height:22px;background:#f4f4f4;box-sizing:border-box;border-top:1px solid #a0a0a0;border-left:1px solid #a0a0a0;border-right:1px solid #fff;border-bottom:1px solid #fff;"></div>
<div style="top:62.84px;font-size:12px;line-height:12px;white-space:pre;color:#a4a4a4;letter-spacing:0.365px;left:475.28px;text-shadow:1px 1px 0 #fff;">Конъюнктурный</div>
<div style="top:62.84px;font-size:12px;line-height:12px;white-space:pre;color:#a4a4a4;letter-spacing:0.262px;left:575.28px;text-shadow:1px 1px 0 #fff;">Поправки</div>
<div style="top:62.84px;font-size:12px;line-height:12px;white-space:pre;color:#a4a4a4;letter-spacing:0.35px;left:639.28px;text-shadow:1px 1px 0 #fff;">Формулы</div>
<div style="top:62.84px;font-size:12px;line-height:12px;white-space:pre;letter-spacing:0.048px;left:702.28px;">Структура</div>
<div style="top:62.84px;font-size:12px;line-height:12px;white-space:pre;letter-spacing:0.252px;left:769.28px;">Список открытых окон</div>
<svg style="left:903px;top:67px" width="5" height="3" viewBox="0 0 5 3"><path d="M0 0h5v1h-1v1h-1v1h-1v-1h-1v-1h-1z" fill="#000"/></svg>
<div style="left:916px;top:60px;width:296px;height:17px;background:#fff;"></div>
<div style="left:1202px;top:61px;width:9px;height:15px;background:#f0f0f0;"></div>
<div style="top:61.84px;font-size:12px;line-height:12px;white-space:pre;letter-spacing:0.033px;left:918.28px;">Текущий уровень цен</div>
<svg style="left:1204px;top:67px" width="5" height="3" viewBox="0 0 5 3"><path d="M0 0h5v1h-1v1h-1v1h-1v-1h-1v-1h-1z" fill="#000"/></svg>
<div style="left:1215px;top:57px;width:1px;height:24px;background:#a0a0a0;"></div>
<div style="left:1216px;top:57px;width:1px;height:24px;background:#ffffff;"></div>
<div style="left:0px;top:83px;width:1919px;height:1px;background:#a0a0a0;"></div>
<div style="left:0px;top:84px;width:1919px;height:19px;background:#fff;"></div>
<div style="left:0px;top:103px;width:1919px;height:1px;background:#a0a0a0;"></div>
<div style="left:1px;top:84px;width:201px;height:19px;background:#f0f0f0;"></div>
<div style="left:3px;top:85px;width:137px;height:17px;background:#fff;box-sizing:border-box;border:1px solid #5c5c5c;"></div>
<div style="left:4px;top:86px;width:135px;height:15px;background:transparent;box-sizing:border-box;border-top:1px solid #9c9c9c;border-left:1px solid #9c9c9c;"></div>
<div style="top:88.48px;font-size:11px;line-height:11px;white-space:pre;transform:scaleY(1.13);transform-origin:0 0;letter-spacing:-0.117px;left:6.00px;">ЛС1.V4</div>
<div style="left:141px;top:84px;width:1px;height:19px;background:#ffffff;"></div>
<div style="left:201px;top:84px;width:1px;height:19px;background:#a0a0a0;"></div>
<div style="left:206.5px;top:88.5px;font-family:'Liberation Mono',monospace;font-size:12px;line-height:12px;color:#000">1</div>
<div style="left:1879px;top:84px;width:40px;height:19px;background:#f0f0f0;"></div>
<svg style="left:1883px;top:88px" width="8" height="15" viewBox="0 0 8 15"><path d="M.5 5.500l3.300-3.300 3.300 3.300M.5 9.500l3.300 3.300 3.300-3.300" fill="none" stroke="#c0c0c0" stroke-width="1.500"/></svg>
<div style="left:1901px;top:87px;width:14px;height:14px;background:#e81018;border-radius:2px;box-sizing:border-box;border:1px solid #a80008;"></div>
<svg style="left:1901px;top:87px" width="14" height="14" viewBox="0 0 14 14"><path d="M4 4l6 6M10 4l-6 6" stroke="#fff" stroke-width="2.200"/></svg>
<div style="left:1px;top:104px;width:1917px;height:1px;background:#ffffff;"></div>
<div style="left:2px;top:108px;width:1914px;height:1px;background:#ffffff;"></div>
<div style="left:4px;top:112px;width:1908px;height:1px;background:#a0a0a0;"></div>
<div style="left:5px;top:113px;width:1906px;height:1px;background:#ffffff;"></div>
<div style="left:4px;top:112px;width:1px;height:26px;background:#a0a0a0;"></div>
<div style="left:5px;top:113px;width:1px;height:24px;background:#ffffff;"></div>
<div style="left:1912px;top:112px;width:1px;height:26px;background:#ffffff;"></div>
<div style="left:1911px;top:112px;width:1px;height:26px;background:#a0a0a0;"></div>
<div style="left:8px;top:114px;width:121px;height:20px;background:#f8f8f8;box-sizing:border-box;border-top:1px solid #696969;border-left:1px solid #696969;border-right:1px solid #fff;border-bottom:1px solid #fff;"></div>
<div style="left:9px;top:115px;width:119px;height:18px;background:#f8f8f8;box-sizing:border-box;border-top:1px solid #a0a0a0;border-left:1px solid #a0a0a0;"></div>
<div style="left:10px;top:116px;width:118px;height:17px;background:transparent;box-sizing:border-box;border:1px dotted #000;"></div>
<div style="top:119.48px;font-size:11px;line-height:11px;white-space:pre;transform:scaleY(1.13);transform-origin:0 0;letter-spacing:0.026px;left:16.00px;">Текущий уровень цен</div>
<div style="left:133px;top:114px;width:1px;height:20px;background:#a0a0a0;"></div>
<div style="left:134px;top:114px;width:1px;height:20px;background:#ffffff;"></div>
<div style="left:5px;top:138px;width:1908px;height:825px;background:#fff;"></div>
<div style="left:5px;top:138px;width:1906px;height:74px;background:#f0f0f0;"></div>
<div style="left:4px;top:137px;width:1908px;height:1px;background:#a8a8a8;"></div>
<div style="left:1151px;top:154px;width:760px;height:1px;background:#a8a8a8;"></div>
<div style="left:4px;top:194px;width:1908px;height:1px;background:#a8a8a8;"></div>
<div style="left:4px;top:212px;width:1908px;height:1px;background:#a8a8a8;"></div>
<div style="left:4px;top:137px;width:1px;height:826px;background:#a8a8a8;"></div>
<div style="left:44px;top:138px;width:1px;height:75px;background:#a8a8a8;"></div>
<div style="left:194px;top:138px;width:1px;height:75px;background:#a8a8a8;"></div>
<div style="left:1061px;top:138px;width:1px;height:75px;background:#a8a8a8;"></div>
<div style="left:1151px;top:138px;width:1px;height:75px;background:#a8a8a8;"></div>
<div style="left:1246px;top:155px;width:1px;height:58px;background:#a8a8a8;"></div>
<div style="left:1341px;top:155px;width:1px;height:58px;background:#a8a8a8;"></div>
<div style="left:1436px;top:138px;width:1px;height:75px;background:#a8a8a8;"></div>
<div style="left:1531px;top:155px;width:1px;height:58px;background:#a8a8a8;"></div>
<div style="left:1626px;top:155px;width:1px;height:58px;background:#a8a8a8;"></div>
<div style="left:1721px;top:155px;width:1px;height:58px;background:#a8a8a8;"></div>
<div style="left:1816px;top:155px;width:1px;height:58px;background:#a8a8a8;"></div>
<div style="left:1911px;top:138px;width:1px;height:75px;background:#a8a8a8;"></div>
<div style="top:160.48px;font-size:11px;line-height:11px;white-space:pre;transform:scaleY(1.13);transform-origin:0 0;letter-spacing:0.47px;left:2.23px;width:46px;text-align:center;">№ п/п</div>
<div style="top:160.48px;font-size:11px;line-height:11px;white-space:pre;transform:scaleY(1.13);transform-origin:0 0;letter-spacing:0.037px;left:2.02px;width:234px;text-align:center;">Обоснование</div>
<div style="top:160.48px;font-size:11px;line-height:11px;white-space:pre;transform:scaleY(1.13);transform-origin:0 0;letter-spacing:0.084px;left:328.04px;width:600px;text-align:center;">Наименование работ и затрат</div>
<div style="top:153.48px;font-size:11px;line-height:11px;white-space:pre;transform:scaleY(1.13);transform-origin:0 0;letter-spacing:0.111px;left:806.06px;width:600px;text-align:center;">Единица</div>
<div style="top:166.48px;font-size:11px;line-height:11px;white-space:pre;transform:scaleY(1.13);transform-origin:0 0;letter-spacing:0.241px;left:806.12px;width:600px;text-align:center;">измерения</div>
<div style="top:140.48px;font-size:11px;line-height:11px;white-space:pre;transform:scaleY(1.13);transform-origin:0 0;letter-spacing:0.126px;left:993.06px;width:600px;text-align:center;">Количество</div>
<div style="top:140.48px;font-size:11px;line-height:11px;white-space:pre;transform:scaleY(1.13);transform-origin:0 0;letter-spacing:0.045px;left:1429.02px;width:488px;text-align:center;">Сметная стоимость, руб.</div>
<div style="top:163.48px;font-size:11px;line-height:11px;white-space:pre;transform:scaleY(1.13);transform-origin:0 0;letter-spacing:0.055px;left:899.03px;width:600px;text-align:center;">на единицу</div>
<div style="top:176.48px;font-size:11px;line-height:11px;white-space:pre;transform:scaleY(1.13);transform-origin:0 0;letter-spacing:0.241px;left:899.12px;width:600px;text-align:center;">измерения</div>
<div style="top:169.48px;font-size:11px;line-height:11px;white-space:pre;transform:scaleY(1.13);transform-origin:0 0;letter-spacing:-0.026px;left:993.99px;width:600px;text-align:center;">коэффициенты</div>
<div style="top:163.48px;font-size:11px;line-height:11px;white-space:pre;transform:scaleY(1.13);transform-origin:0 0;letter-spacing:0.214px;left:1089.11px;width:600px;text-align:center;">всего с учетом</div>
<div style="top:176.48px;font-size:11px;line-height:11px;white-space:pre;transform:scaleY(1.13);transform-origin:0 0;letter-spacing:-0.019px;left:1088.99px;width:600px;text-align:center;">коэффициентов</div>
<div style="top:156.48px;font-size:11px;line-height:11px;white-space:pre;transform:scaleY(1.13);transform-origin:0 0;letter-spacing:0.045px;left:1184.02px;width:600px;text-align:center;">на единицу изм. в</div>
<div style="top:169.48px;font-size:11px;line-height:11px;white-space:pre;transform:scaleY(1.13);transform-origin:0 0;letter-spacing:0.143px;left:1184.07px;width:600px;text-align:center;">базисном уровне</div>
<div style="top:182.48px;font-size:11px;line-height:11px;white-space:pre;transform:scaleY(1.13);transform-origin:0 0;letter-spacing:-0.082px;left:1183.96px;width:600px;text-align:center;">цен</div>
<div style="top:169.48px;font-size:11px;line-height:11px;white-space:pre;transform:scaleY(1.13);transform-origin:0 0;letter-spacing:0.401px;left:1279.20px;width:600px;text-align:center;">индекс</div>
<div style="top:156.48px;font-size:11px;line-height:11px;white-space:pre;transform:scaleY(1.13);transform-origin:0 0;letter-spacing:0.045px;left:1431.02px;width:486px;text-align:center;">на единицу изм. в</div>
<div style="top:169.48px;font-size:11px;line-height:11px;white-space:pre;transform:scaleY(1.13);transform-origin:0 0;letter-spacing:0.187px;left:1431.09px;width:486px;text-align:center;">текущем уровне</div>
<div style="top:182.48px;font-size:11px;line-height:11px;white-space:pre;transform:scaleY(1.13);transform-origin:0 0;letter-spacing:-0.082px;left:1430.96px;width:486px;text-align:center;">цен</div>
<div style="top:169.48px;font-size:11px;line-height:11px;white-space:pre;transform:scaleY(1.13);transform-origin:0 0;letter-spacing:-0.026px;left:1620.99px;width:296px;text-align:center;">коэффициенты</div>
<div style="top:163.48px;font-size:11px;line-height:11px;white-space:pre;transform:scaleY(1.13);transform-origin:0 0;letter-spacing:0.282px;left:1811.14px;width:106px;text-align:center;">всего в текущем</div>
<div style="top:176.48px;font-size:11px;line-height:11px;white-space:pre;transform:scaleY(1.13);transform-origin:0 0;letter-spacing:0.015px;left:1811.01px;width:106px;text-align:center;">уровне цен</div>
<div style="top:198.48px;font-size:11px;line-height:11px;white-space:pre;transform:scaleY(1.13);transform-origin:0 0;left:2.00px;width:44px;text-align:center;">1</div>
<div style="top:198.48px;font-size:11px;line-height:11px;white-space:pre;transform:scaleY(1.13);transform-origin:0 0;left:2.00px;width:234px;text-align:center;">2</div>
<div style="top:198.48px;font-size:11px;line-height:11px;white-space:pre;transform:scaleY(1.13);transform-origin:0 0;left:328.00px;width:600px;text-align:center;">3</div>
<div style="top:198.48px;font-size:11px;line-height:11px;white-space:pre;transform:scaleY(1.13);transform-origin:0 0;left:806.00px;width:600px;text-align:center;">4</div>
<div style="top:198.48px;font-size:11px;line-height:11px;white-space:pre;transform:scaleY(1.13);transform-origin:0 0;left:899.00px;width:600px;text-align:center;">5</div>
<div style="top:198.48px;font-size:11px;line-height:11px;white-space:pre;transform:scaleY(1.13);transform-origin:0 0;left:994.00px;width:600px;text-align:center;">6</div>
<div style="top:198.48px;font-size:11px;line-height:11px;white-space:pre;transform:scaleY(1.13);transform-origin:0 0;left:1089.00px;width:600px;text-align:center;">7</div>
<div style="top:198.48px;font-size:11px;line-height:11px;white-space:pre;transform:scaleY(1.13);transform-origin:0 0;left:1184.00px;width:600px;text-align:center;">8</div>
<div style="top:198.48px;font-size:11px;line-height:11px;white-space:pre;transform:scaleY(1.13);transform-origin:0 0;left:1279.00px;width:600px;text-align:center;">9</div>
<div style="top:198.48px;font-size:11px;line-height:11px;white-space:pre;transform:scaleY(1.13);transform-origin:0 0;left:1431.00px;width:486px;text-align:center;">10</div>
<div style="top:198.48px;font-size:11px;line-height:11px;white-space:pre;transform:scaleY(1.13);transform-origin:0 0;left:1621.00px;width:296px;text-align:center;">11</div>
<div style="top:198.48px;font-size:11px;line-height:11px;white-space:pre;transform:scaleY(1.13);transform-origin:0 0;left:1811.00px;width:106px;text-align:center;">12</div>
<div style="top:215.48px;font-size:11px;line-height:11px;white-space:pre;transform:scaleY(1.13);transform-origin:0 0;left:7.50px;">4</div>
<div style="top:215.48px;font-size:11px;line-height:11px;white-space:pre;transform:scaleY(1.13);transform-origin:0 0;letter-spacing:-0.118px;left:47.60px;">м09-01-001-08</div>
<div style="top:215.48px;font-size:11px;line-height:11px;white-space:pre;transform:scaleY(1.13);transform-origin:0 0;letter-spacing:-0.003px;left:197.60px;">Электропечь сопротивления камерная с механизированным приводом дверцы и выкатным подом, рабочая температура до 1350°C, мощность: 2000 кВт</div>
<div style="top:215.48px;font-size:11px;line-height:11px;white-space:pre;transform:scaleY(1.13);transform-origin:0 0;letter-spacing:-0.602px;left:1064.60px;">ШТ</div>
<div style="top:215.48px;font-size:11px;line-height:11px;white-space:pre;transform:scaleY(1.13);transform-origin:0 0;right:674.60px;text-align:right;">1</div>
<div style="top:215.48px;font-size:11px;line-height:11px;white-space:pre;transform:scaleY(1.13);transform-origin:0 0;right:484.60px;text-align:right;">1</div>
<div style="top:233.48px;font-size:11px;line-height:11px;white-space:pre;transform:scaleY(1.13);transform-origin:0 0;font-weight:bold;right:1728.00px;text-align:right;">1</div>
<div style="top:233.48px;font-size:11px;line-height:11px;white-space:pre;transform:scaleY(1.13);transform-origin:0 0;font-weight:bold;letter-spacing:1.292px;left:197.60px;">ОТ (ЗТ)</div>
<div style="top:233.48px;font-size:11px;line-height:11px;white-space:pre;transform:scaleY(1.13);transform-origin:0 0;font-weight:bold;letter-spacing:0.259px;left:1064.60px;">чел.-ч.</div>
<div style="top:233.48px;font-size:11px;line-height:11px;white-space:pre;transform:scaleY(1.13);transform-origin:0 0;font-weight:bold;letter-spacing:0.95px;right:483.65px;text-align:right;">3 570</div>
<div style="top:233.48px;font-size:11px;line-height:11px;white-space:pre;transform:scaleY(1.13);transform-origin:0 0;font-weight:bold;letter-spacing:0.95px;right:8.65px;text-align:right;">1 347 460,8</div>
<div style="left:5px;top:248px;width:1906px;height:16px;background:#d6fde8;"></div>
<svg style="left:17px;top:249px" width="15" height="15" viewBox="0 1 15 15"><defs><linearGradient id="hg" x1="0" y1="0" x2="0" y2="1"><stop offset="0" stop-color="#ff8a10"/><stop offset="1" stop-color="#e85a00"/></linearGradient><linearGradient id="sk" x1="0" y1="0" x2="1" y2="0"><stop offset="0" stop-color="#ffc890"/><stop offset="1" stop-color="#d87848"/></linearGradient></defs><path d="M3.2 7.2h6.5v4.5h-2.5v4H3.8v-3.5z" fill="url(#sk)"/><path d="M6.5 7h5.6l.6 2-.5 1 .3 1.2-1 .4.1 1.4-2.2.2-2-1.500z" fill="#e89868"/><path d="M1.500 6.800h5.200v1.200l-1.600.4.300 1.800-2.100.3-1.600-1.700z" fill="#1a0a04"/><path d="M6.300 7h2.300v1.300H6.300z" fill="#1a0a04"/><rect x="9.900" y="8" width="1.200" height="1.300" fill="#100804"/><path d="M.6 6.700c-.5-1.500.3-2.300 1.100-2.500C2.400 2 4.400 1 6.800 1c2.900 0 4.600 1.500 5.200 3.400 1.100.5 2 1.300 2.500 2.300.2.400-.1.700-.5.600l-4-.7-4.600.5z" fill="url(#hg)"/><rect x="5.200" y="4" width="4" height="1.800" rx=".6" fill="#ffc428"/></svg>
<div style="top:250.48px;font-size:11px;line-height:11px;white-space:pre;transform:scaleY(1.13);transform-origin:0 0;letter-spacing:-0.12px;left:47.60px;">1-100-43</div>
<div style="top:250.48px;font-size:11px;line-height:11px;white-space:pre;transform:scaleY(1.13);transform-origin:0 0;letter-spacing:-0.108px;left:197.60px;">Затраты труда рабочих (Средний разряд - 4,3)</div>
<div style="top:250.48px;font-size:11px;line-height:11px;white-space:pre;transform:scaleY(1.13);transform-origin:0 0;letter-spacing:-0.485px;left:1064.60px;">чел.-ч.</div>
<div style="top:250.48px;font-size:11px;line-height:11px;white-space:pre;transform:scaleY(1.13);transform-origin:0 0;right:674.60px;text-align:right;">3 570</div>
<div style="top:250.48px;font-size:11px;line-height:11px;white-space:pre;transform:scaleY(1.13);transform-origin:0 0;right:484.60px;text-align:right;">3 570</div>
<div style="top:250.48px;font-size:11px;line-height:11px;white-space:pre;transform:scaleY(1.13);transform-origin:0 0;right:199.60px;text-align:right;">377,44</div>
<div style="top:250.48px;font-size:11px;line-height:11px;white-space:pre;transform:scaleY(1.13);transform-origin:0 0;right:9.60px;text-align:right;">1 347 460,8</div>
<div style="top:267.48px;font-size:11px;line-height:11px;white-space:pre;transform:scaleY(1.13);transform-origin:0 0;font-weight:bold;right:1728.00px;text-align:right;">2</div>
<div style="top:267.48px;font-size:11px;line-height:11px;white-space:pre;transform:scaleY(1.13);transform-origin:0 0;font-weight:bold;letter-spacing:1.21px;left:197.60px;">ЭМ</div>
<div style="top:267.48px;font-size:11px;line-height:11px;white-space:pre;transform:scaleY(1.13);transform-origin:0 0;font-weight:bold;letter-spacing:0.95px;right:8.65px;text-align:right;">781 604,54</div>
<div style="top:284.48px;font-size:11px;line-height:11px;white-space:pre;transform:scaleY(1.13);transform-origin:0 0;font-weight:bold;letter-spacing:1.322px;left:197.60px;">ОТм(ЗТм)</div>
<div style="top:284.48px;font-size:11px;line-height:11px;white-space:pre;transform:scaleY(1.13);transform-origin:0 0;font-weight:bold;letter-spacing:0.259px;left:1064.60px;">чел.-ч.</div>
<div style="top:284.48px;font-size:11px;line-height:11px;white-space:pre;transform:scaleY(1.13);transform-origin:0 0;font-weight:bold;letter-spacing:0.95px;right:483.65px;text-align:right;">859,94</div>
<div style="top:284.48px;font-size:11px;line-height:11px;white-space:pre;transform:scaleY(1.13);transform-origin:0 0;font-weight:bold;letter-spacing:0.95px;right:8.65px;text-align:right;">363 486,8</div>
<div style="left:5px;top:299px;width:1906px;height:16px;background:#d6e9fc;"></div>
<svg style="left:16px;top:304px" width="16" height="11" viewBox="0 0 16 11"><defs><linearGradient id="tb" x1="0" y1="0" x2="1" y2="1"><stop offset="0" stop-color="#2a8cf0"/><stop offset="1" stop-color="#0c56c8"/></linearGradient></defs><path d="M0 2.200h8.500L10 .4l1.200.3-.9 1.700v4.400H0z" fill="url(#tb)"/><path d="M10.300 1.500h2.600l1.500 2.300 1.600.6v2.400h-5.700z" fill="#f0901c"/><path d="M11.100 2.300h1.700l.9 1.400h-2.600z" fill="#e8ffff"/><rect x="1" y="6.200" width="15" height="1" fill="#202020"/><circle cx="3.500" cy="7" r="1.900" fill="#181818"/><circle cx="3.500" cy="7" r=".8" fill="#f0e878"/><circle cx="13.500" cy="7" r="1.900" fill="#181818"/><circle cx="13.500" cy="7" r=".8" fill="#f0e878"/><rect x="2" y="8.500" width="3" height="1" fill="#c0c4c8"/><rect x="12" y="8.500" width="3" height="1" fill="#c0c4c8"/><rect x=".5" y="9.500" width="15" height=".8" fill="#606060"/></svg>
<div style="top:301.48px;font-size:11px;line-height:11px;white-space:pre;transform:scaleY(1.13);transform-origin:0 0;letter-spacing:-0.085px;left:47.60px;">91.05.04-007</div>
<div style="top:301.48px;font-size:11px;line-height:11px;white-space:pre;transform:scaleY(1.13);transform-origin:0 0;letter-spacing:0.105px;left:197.60px;">Краны мостовые электрические, грузоподъемность 16 т</div>
<div style="top:301.48px;font-size:11px;line-height:11px;white-space:pre;transform:scaleY(1.13);transform-origin:0 0;letter-spacing:-0.252px;left:1064.60px;">маш.-ч</div>
<div style="top:301.48px;font-size:11px;line-height:11px;white-space:pre;transform:scaleY(1.13);transform-origin:0 0;right:674.60px;text-align:right;">702,1</div>
<div style="top:301.48px;font-size:11px;line-height:11px;white-space:pre;transform:scaleY(1.13);transform-origin:0 0;right:484.60px;text-align:right;">702,1</div>
<div style="top:301.48px;font-size:11px;line-height:11px;white-space:pre;transform:scaleY(1.13);transform-origin:0 0;right:389.60px;text-align:right;">593,88</div>
<div style="top:301.48px;font-size:11px;line-height:11px;white-space:pre;transform:scaleY(1.13);transform-origin:0 0;right:294.60px;text-align:right;">1,35</div>
<div style="top:301.48px;font-size:11px;line-height:11px;white-space:pre;transform:scaleY(1.13);transform-origin:0 0;right:199.60px;text-align:right;">801,74</div>
<div style="top:301.48px;font-size:11px;line-height:11px;white-space:pre;transform:scaleY(1.13);transform-origin:0 0;right:9.60px;text-align:right;">562 901,65</div>
<div style="left:5px;top:316px;width:1906px;height:16px;background:#d6fde8;"></div>
<svg style="left:17px;top:317px" width="15" height="15" viewBox="0 1 15 15"><defs><linearGradient id="hg" x1="0" y1="0" x2="0" y2="1"><stop offset="0" stop-color="#ff8a10"/><stop offset="1" stop-color="#e85a00"/></linearGradient><linearGradient id="sk" x1="0" y1="0" x2="1" y2="0"><stop offset="0" stop-color="#ffc890"/><stop offset="1" stop-color="#d87848"/></linearGradient></defs><path d="M3.2 7.2h6.5v4.5h-2.5v4H3.8v-3.5z" fill="url(#sk)"/><path d="M6.5 7h5.6l.6 2-.5 1 .3 1.2-1 .4.1 1.4-2.2.2-2-1.500z" fill="#e89868"/><path d="M1.500 6.800h5.200v1.200l-1.600.4.300 1.800-2.100.3-1.600-1.700z" fill="#1a0a04"/><path d="M6.300 7h2.300v1.300H6.300z" fill="#1a0a04"/><rect x="9.900" y="8" width="1.200" height="1.300" fill="#100804"/><path d="M.6 6.700c-.5-1.500.3-2.300 1.100-2.500C2.400 2 4.400 1 6.800 1c2.900 0 4.600 1.500 5.200 3.400 1.100.5 2 1.300 2.500 2.300.2.400-.1.700-.5.600l-4-.7-4.600.5z" fill="url(#hg)"/><rect x="5.200" y="4" width="4" height="1.800" rx=".6" fill="#ffc428"/></svg>
<div style="top:318.48px;font-size:11px;line-height:11px;white-space:pre;transform:scaleY(1.13);transform-origin:0 0;letter-spacing:-0.118px;left:47.60px;">4-100-050</div>
<div style="top:318.48px;font-size:11px;line-height:11px;white-space:pre;transform:scaleY(1.13);transform-origin:0 0;letter-spacing:0.014px;left:197.60px;">ОТм(ЗТм) Средний разряд машинистов 5</div>
<div style="top:318.48px;font-size:11px;line-height:11px;white-space:pre;transform:scaleY(1.13);transform-origin:0 0;letter-spacing:-0.485px;left:1064.60px;">чел.-ч.</div>
<div style="top:318.48px;font-size:11px;line-height:11px;white-space:pre;transform:scaleY(1.13);transform-origin:0 0;right:674.60px;text-align:right;">702,1</div>
<div style="top:318.48px;font-size:11px;line-height:11px;white-space:pre;transform:scaleY(1.13);transform-origin:0 0;right:484.60px;text-align:right;">702,1</div>
<div style="top:318.48px;font-size:11px;line-height:11px;white-space:pre;transform:scaleY(1.13);transform-origin:0 0;right:199.60px;text-align:right;">415,18</div>
<div style="top:318.48px;font-size:11px;line-height:11px;white-space:pre;transform:scaleY(1.13);transform-origin:0 0;right:9.60px;text-align:right;">291 497,88</div>
<div style="left:5px;top:333px;width:1906px;height:16px;background:#d6e9fc;"></div>
<svg style="left:16px;top:338px" width="16" height="11" viewBox="0 0 16 11"><defs><linearGradient id="tb" x1="0" y1="0" x2="1" y2="1"><stop offset="0" stop-color="#2a8cf0"/><stop offset="1" stop-color="#0c56c8"/></linearGradient></defs><path d="M0 2.200h8.500L10 .4l1.200.3-.9 1.700v4.400H0z" fill="url(#tb)"/><path d="M10.300 1.500h2.600l1.500 2.300 1.600.6v2.400h-5.700z" fill="#f0901c"/><path d="M11.100 2.300h1.700l.9 1.400h-2.600z" fill="#e8ffff"/><rect x="1" y="6.200" width="15" height="1" fill="#202020"/><circle cx="3.500" cy="7" r="1.900" fill="#181818"/><circle cx="3.500" cy="7" r=".8" fill="#f0e878"/><circle cx="13.500" cy="7" r="1.900" fill="#181818"/><circle cx="13.500" cy="7" r=".8" fill="#f0e878"/><rect x="2" y="8.500" width="3" height="1" fill="#c0c4c8"/><rect x="12" y="8.500" width="3" height="1" fill="#c0c4c8"/><rect x=".5" y="9.500" width="15" height=".8" fill="#606060"/></svg>
<div style="top:335.48px;font-size:11px;line-height:11px;white-space:pre;transform:scaleY(1.13);transform-origin:0 0;letter-spacing:-0.085px;left:47.60px;">91.05.05-015</div>
<div style="top:335.48px;font-size:11px;line-height:11px;white-space:pre;transform:scaleY(1.13);transform-origin:0 0;letter-spacing:0.057px;left:197.60px;">Краны на автомобильном ходу, грузоподъемность 16 т</div>
<div style="top:335.48px;font-size:11px;line-height:11px;white-space:pre;transform:scaleY(1.13);transform-origin:0 0;letter-spacing:-0.252px;left:1064.60px;">маш.-ч</div>
<div style="top:335.48px;font-size:11px;line-height:11px;white-space:pre;transform:scaleY(1.13);transform-origin:0 0;right:674.60px;text-align:right;">92,11</div>
<div style="top:335.48px;font-size:11px;line-height:11px;white-space:pre;transform:scaleY(1.13);transform-origin:0 0;right:484.60px;text-align:right;">92,11</div>
<div style="top:335.48px;font-size:11px;line-height:11px;white-space:pre;transform:scaleY(1.13);transform-origin:0 0;right:199.60px;text-align:right;">1 517,53</div>
<div style="top:335.48px;font-size:11px;line-height:11px;white-space:pre;transform:scaleY(1.13);transform-origin:0 0;right:9.60px;text-align:right;">139 779,69</div>
<div style="left:5px;top:350px;width:1906px;height:16px;background:#d6fde8;"></div>
<svg style="left:17px;top:351px" width="15" height="15" viewBox="0 1 15 15"><defs><linearGradient id="hg" x1="0" y1="0" x2="0" y2="1"><stop offset="0" stop-color="#ff8a10"/><stop offset="1" stop-color="#e85a00"/></linearGradient><linearGradient id="sk" x1="0" y1="0" x2="1" y2="0"><stop offset="0" stop-color="#ffc890"/><stop offset="1" stop-color="#d87848"/></linearGradient></defs><path d="M3.2 7.2h6.5v4.5h-2.5v4H3.8v-3.5z" fill="url(#sk)"/><path d="M6.5 7h5.6l.6 2-.5 1 .3 1.2-1 .4.1 1.4-2.2.2-2-1.500z" fill="#e89868"/><path d="M1.500 6.800h5.200v1.200l-1.600.4.300 1.800-2.100.3-1.600-1.700z" fill="#1a0a04"/><path d="M6.300 7h2.300v1.300H6.300z" fill="#1a0a04"/><rect x="9.900" y="8" width="1.200" height="1.300" fill="#100804"/><path d="M.6 6.700c-.5-1.500.3-2.300 1.100-2.500C2.400 2 4.400 1 6.800 1c2.900 0 4.600 1.500 5.200 3.400 1.100.5 2 1.300 2.500 2.300.2.400-.1.700-.5.600l-4-.7-4.600.5z" fill="url(#hg)"/><rect x="5.200" y="4" width="4" height="1.800" rx=".6" fill="#ffc428"/></svg>
<div style="top:352.48px;font-size:11px;line-height:11px;white-space:pre;transform:scaleY(1.13);transform-origin:0 0;letter-spacing:-0.118px;left:47.60px;">4-100-060</div>
<div style="top:352.48px;font-size:11px;line-height:11px;white-space:pre;transform:scaleY(1.13);transform-origin:0 0;letter-spacing:0.014px;left:197.60px;">ОТм(ЗТм) Средний разряд машинистов 6</div>
<div style="top:352.48px;font-size:11px;line-height:11px;white-space:pre;transform:scaleY(1.13);transform-origin:0 0;letter-spacing:-0.485px;left:1064.60px;">чел.-ч.</div>
<div style="top:352.48px;font-size:11px;line-height:11px;white-space:pre;transform:scaleY(1.13);transform-origin:0 0;right:674.60px;text-align:right;">92,11</div>
<div style="top:352.48px;font-size:11px;line-height:11px;white-space:pre;transform:scaleY(1.13);transform-origin:0 0;right:484.60px;text-align:right;">92,11</div>
<div style="top:352.48px;font-size:11px;line-height:11px;white-space:pre;transform:scaleY(1.13);transform-origin:0 0;right:199.60px;text-align:right;">485,28</div>
<div style="top:352.48px;font-size:11px;line-height:11px;white-space:pre;transform:scaleY(1.13);transform-origin:0 0;right:9.60px;text-align:right;">44 699,14</div>
<div style="left:5px;top:367px;width:1906px;height:16px;background:#d6e9fc;"></div>
<svg style="left:16px;top:372px" width="16" height="11" viewBox="0 0 16 11"><defs><linearGradient id="tb" x1="0" y1="0" x2="1" y2="1"><stop offset="0" stop-color="#2a8cf0"/><stop offset="1" stop-color="#0c56c8"/></linearGradient></defs><path d="M0 2.200h8.500L10 .4l1.200.3-.9 1.700v4.400H0z" fill="url(#tb)"/><path d="M10.300 1.500h2.600l1.500 2.300 1.600.6v2.400h-5.700z" fill="#f0901c"/><path d="M11.100 2.300h1.700l.9 1.400h-2.600z" fill="#e8ffff"/><rect x="1" y="6.200" width="15" height="1" fill="#202020"/><circle cx="3.500" cy="7" r="1.900" fill="#181818"/><circle cx="3.500" cy="7" r=".8" fill="#f0e878"/><circle cx="13.500" cy="7" r="1.900" fill="#181818"/><circle cx="13.500" cy="7" r=".8" fill="#f0e878"/><rect x="2" y="8.500" width="3" height="1" fill="#c0c4c8"/><rect x="12" y="8.500" width="3" height="1" fill="#c0c4c8"/><rect x=".5" y="9.500" width="15" height=".8" fill="#606060"/></svg>
<div style="top:369.48px;font-size:11px;line-height:11px;white-space:pre;transform:scaleY(1.13);transform-origin:0 0;letter-spacing:-0.085px;left:47.60px;">91.06.03-062</div>
<div style="top:369.48px;font-size:11px;line-height:11px;white-space:pre;transform:scaleY(1.13);transform-origin:0 0;letter-spacing:0.065px;left:197.60px;">Лебедки электрические тяговым усилием до 31,39 кН (3,2 т)</div>
<div style="top:369.48px;font-size:11px;line-height:11px;white-space:pre;transform:scaleY(1.13);transform-origin:0 0;letter-spacing:-0.252px;left:1064.60px;">маш.-ч</div>
<div style="top:369.48px;font-size:11px;line-height:11px;white-space:pre;transform:scaleY(1.13);transform-origin:0 0;right:674.60px;text-align:right;">42,84</div>
<div style="top:369.48px;font-size:11px;line-height:11px;white-space:pre;transform:scaleY(1.13);transform-origin:0 0;right:484.60px;text-align:right;">42,84</div>
<div style="top:369.48px;font-size:11px;line-height:11px;white-space:pre;transform:scaleY(1.13);transform-origin:0 0;right:389.60px;text-align:right;">13,44</div>
<div style="top:369.48px;font-size:11px;line-height:11px;white-space:pre;transform:scaleY(1.13);transform-origin:0 0;right:294.60px;text-align:right;">1,27</div>
<div style="top:369.48px;font-size:11px;line-height:11px;white-space:pre;transform:scaleY(1.13);transform-origin:0 0;right:199.60px;text-align:right;">17,07</div>
<div style="top:369.48px;font-size:11px;line-height:11px;white-space:pre;transform:scaleY(1.13);transform-origin:0 0;right:9.60px;text-align:right;">731,28</div>
<div style="left:5px;top:384px;width:1906px;height:16px;background:#d6e9fc;"></div>
<svg style="left:16px;top:389px" width="16" height="11" viewBox="0 0 16 11"><defs><linearGradient id="tb" x1="0" y1="0" x2="1" y2="1"><stop offset="0" stop-color="#2a8cf0"/><stop offset="1" stop-color="#0c56c8"/></linearGradient></defs><path d="M0 2.200h8.500L10 .4l1.200.3-.9 1.700v4.400H0z" fill="url(#tb)"/><path d="M10.300 1.500h2.600l1.500 2.300 1.600.6v2.400h-5.700z" fill="#f0901c"/><path d="M11.100 2.300h1.700l.9 1.400h-2.600z" fill="#e8ffff"/><rect x="1" y="6.200" width="15" height="1" fill="#202020"/><circle cx="3.500" cy="7" r="1.900" fill="#181818"/><circle cx="3.500" cy="7" r=".8" fill="#f0e878"/><circle cx="13.500" cy="7" r="1.900" fill="#181818"/><circle cx="13.500" cy="7" r=".8" fill="#f0e878"/><rect x="2" y="8.500" width="3" height="1" fill="#c0c4c8"/><rect x="12" y="8.500" width="3" height="1" fill="#c0c4c8"/><rect x=".5" y="9.500" width="15" height=".8" fill="#606060"/></svg>
<div style="top:386.48px;font-size:11px;line-height:11px;white-space:pre;transform:scaleY(1.13);transform-origin:0 0;letter-spacing:-0.085px;left:47.60px;">91.14.02-004</div>
<div style="top:386.48px;font-size:11px;line-height:11px;white-space:pre;transform:scaleY(1.13);transform-origin:0 0;letter-spacing:0.026px;left:197.60px;">Автомобили бортовые, грузоподъемность до 15 т</div>
<div style="top:386.48px;font-size:11px;line-height:11px;white-space:pre;transform:scaleY(1.13);transform-origin:0 0;letter-spacing:-0.252px;left:1064.60px;">маш.-ч</div>
<div style="top:386.48px;font-size:11px;line-height:11px;white-space:pre;transform:scaleY(1.13);transform-origin:0 0;right:674.60px;text-align:right;">65,73</div>
<div style="top:386.48px;font-size:11px;line-height:11px;white-space:pre;transform:scaleY(1.13);transform-origin:0 0;right:484.60px;text-align:right;">65,73</div>
<div style="top:386.48px;font-size:11px;line-height:11px;white-space:pre;transform:scaleY(1.13);transform-origin:0 0;right:199.60px;text-align:right;">1 105,73</div>
<div style="top:386.48px;font-size:11px;line-height:11px;white-space:pre;transform:scaleY(1.13);transform-origin:0 0;right:9.60px;text-align:right;">72 679,63</div>
<div style="left:5px;top:401px;width:1906px;height:16px;background:#d6fde8;"></div>
<svg style="left:17px;top:402px" width="15" height="15" viewBox="0 1 15 15"><defs><linearGradient id="hg" x1="0" y1="0" x2="0" y2="1"><stop offset="0" stop-color="#ff8a10"/><stop offset="1" stop-color="#e85a00"/></linearGradient><linearGradient id="sk" x1="0" y1="0" x2="1" y2="0"><stop offset="0" stop-color="#ffc890"/><stop offset="1" stop-color="#d87848"/></linearGradient></defs><path d="M3.2 7.2h6.5v4.5h-2.5v4H3.8v-3.5z" fill="url(#sk)"/><path d="M6.5 7h5.6l.6 2-.5 1 .3 1.2-1 .4.1 1.4-2.2.2-2-1.500z" fill="#e89868"/><path d="M1.500 6.800h5.200v1.200l-1.600.4.300 1.800-2.100.3-1.600-1.700z" fill="#1a0a04"/><path d="M6.300 7h2.300v1.300H6.300z" fill="#1a0a04"/><rect x="9.900" y="8" width="1.200" height="1.300" fill="#100804"/><path d="M.6 6.700c-.5-1.500.3-2.300 1.100-2.500C2.400 2 4.400 1 6.800 1c2.900 0 4.600 1.500 5.200 3.400 1.100.5 2 1.300 2.500 2.300.2.400-.1.700-.5.600l-4-.7-4.600.5z" fill="url(#hg)"/><rect x="5.200" y="4" width="4" height="1.800" rx=".6" fill="#ffc428"/></svg>
<div style="top:403.48px;font-size:11px;line-height:11px;white-space:pre;transform:scaleY(1.13);transform-origin:0 0;letter-spacing:-0.118px;left:47.60px;">4-100-050</div>
<div style="top:403.48px;font-size:11px;line-height:11px;white-space:pre;transform:scaleY(1.13);transform-origin:0 0;letter-spacing:0.014px;left:197.60px;">ОТм(ЗТм) Средний разряд машинистов 5</div>
<div style="top:403.48px;font-size:11px;line-height:11px;white-space:pre;transform:scaleY(1.13);transform-origin:0 0;letter-spacing:-0.485px;left:1064.60px;">чел.-ч.</div>
<div style="top:403.48px;font-size:11px;line-height:11px;white-space:pre;transform:scaleY(1.13);transform-origin:0 0;right:674.60px;text-align:right;">65,73</div>
<div style="top:403.48px;font-size:11px;line-height:11px;white-space:pre;transform:scaleY(1.13);transform-origin:0 0;right:484.60px;text-align:right;">65,73</div>
<div style="top:403.48px;font-size:11px;line-height:11px;white-space:pre;transform:scaleY(1.13);transform-origin:0 0;right:199.60px;text-align:right;">415,18</div>
<div style="top:403.48px;font-size:11px;line-height:11px;white-space:pre;transform:scaleY(1.13);transform-origin:0 0;right:9.60px;text-align:right;">27 289,78</div>
<div style="left:5px;top:418px;width:1906px;height:16px;background:#d6e9fc;"></div>
<svg style="left:16px;top:423px" width="16" height="11" viewBox="0 0 16 11"><defs><linearGradient id="tb" x1="0" y1="0" x2="1" y2="1"><stop offset="0" stop-color="#2a8cf0"/><stop offset="1" stop-color="#0c56c8"/></linearGradient></defs><path d="M0 2.200h8.500L10 .4l1.200.3-.9 1.700v4.400H0z" fill="url(#tb)"/><path d="M10.300 1.500h2.600l1.500 2.300 1.600.6v2.400h-5.700z" fill="#f0901c"/><path d="M11.100 2.300h1.700l.9 1.400h-2.600z" fill="#e8ffff"/><rect x="1" y="6.200" width="15" height="1" fill="#202020"/><circle cx="3.500" cy="7" r="1.900" fill="#181818"/><circle cx="3.500" cy="7" r=".8" fill="#f0e878"/><circle cx="13.500" cy="7" r="1.900" fill="#181818"/><circle cx="13.500" cy="7" r=".8" fill="#f0e878"/><rect x="2" y="8.500" width="3" height="1" fill="#c0c4c8"/><rect x="12" y="8.500" width="3" height="1" fill="#c0c4c8"/><rect x=".5" y="9.500" width="15" height=".8" fill="#606060"/></svg>
<div style="top:420.48px;font-size:11px;line-height:11px;white-space:pre;transform:scaleY(1.13);transform-origin:0 0;letter-spacing:-0.085px;left:47.60px;">91.17.04-233</div>
<div style="top:420.48px;font-size:11px;line-height:11px;white-space:pre;transform:scaleY(1.13);transform-origin:0 0;letter-spacing:-0.01px;left:197.60px;">Аппараты сварочные для ручной дуговой сварки, сварочный ток до 350 А</div>
<div style="top:420.48px;font-size:11px;line-height:11px;white-space:pre;transform:scaleY(1.13);transform-origin:0 0;letter-spacing:-0.252px;left:1064.60px;">маш.-ч</div>
<div style="top:420.48px;font-size:11px;line-height:11px;white-space:pre;transform:scaleY(1.13);transform-origin:0 0;right:674.60px;text-align:right;">341,53</div>
<div style="top:420.48px;font-size:11px;line-height:11px;white-space:pre;transform:scaleY(1.13);transform-origin:0 0;right:484.60px;text-align:right;">341,53</div>
<div style="top:420.48px;font-size:11px;line-height:11px;white-space:pre;transform:scaleY(1.13);transform-origin:0 0;right:389.60px;text-align:right;">24,46</div>
<div style="top:420.48px;font-size:11px;line-height:11px;white-space:pre;transform:scaleY(1.13);transform-origin:0 0;right:294.60px;text-align:right;">0,66</div>
<div style="top:420.48px;font-size:11px;line-height:11px;white-space:pre;transform:scaleY(1.13);transform-origin:0 0;right:199.60px;text-align:right;">16,14</div>
<div style="top:420.48px;font-size:11px;line-height:11px;white-space:pre;transform:scaleY(1.13);transform-origin:0 0;right:9.60px;text-align:right;">5 512,29</div>
<div style="top:437.48px;font-size:11px;line-height:11px;white-space:pre;transform:scaleY(1.13);transform-origin:0 0;font-weight:bold;right:1728.00px;text-align:right;">4</div>
<div style="top:437.48px;font-size:11px;line-height:11px;white-space:pre;transform:scaleY(1.13);transform-origin:0 0;font-weight:bold;letter-spacing:0.75px;left:197.60px;">М</div>
<div style="top:437.48px;font-size:11px;line-height:11px;white-space:pre;transform:scaleY(1.13);transform-origin:0 0;font-weight:bold;letter-spacing:0.95px;right:8.65px;text-align:right;">105 913,15</div>
<div style="left:5px;top:452px;width:1906px;height:16px;background:#fde9e9;"></div>
<svg style="left:16px;top:457px" width="16" height="7" viewBox="0 0 16 7"><rect x="5.2" y="0.2" width="5.600" height="2.900" rx="1.400" fill="#ee6a00" stroke="#c04c00" stroke-width=".5"/><rect x="6.800000000000001" y="1.3" width="3" height=".8" rx=".4" fill="#ffb050"/><rect x="2.3" y="2.1" width="5.600" height="2.900" rx="1.400" fill="#ee6a00" stroke="#c04c00" stroke-width=".5"/><rect x="3.9" y="3.2" width="3" height=".8" rx=".4" fill="#ffb050"/><rect x="7.9" y="2.1" width="5.600" height="2.900" rx="1.400" fill="#ee6a00" stroke="#c04c00" stroke-width=".5"/><rect x="9.5" y="3.2" width="3" height=".8" rx=".4" fill="#ffb050"/><rect x="0.2" y="4.1" width="5.600" height="2.900" rx="1.400" fill="#ee6a00" stroke="#c04c00" stroke-width=".5"/><rect x="1.8" y="5.199999999999999" width="3" height=".8" rx=".4" fill="#ffb050"/><rect x="5.2" y="4.1" width="5.600" height="2.900" rx="1.400" fill="#ee6a00" stroke="#c04c00" stroke-width=".5"/><rect x="6.800000000000001" y="5.199999999999999" width="3" height=".8" rx=".4" fill="#ffb050"/><rect x="10.2" y="4.1" width="5.600" height="2.900" rx="1.400" fill="#ee6a00" stroke="#c04c00" stroke-width=".5"/><rect x="11.799999999999999" y="5.199999999999999" width="3" height=".8" rx=".4" fill="#ffb050"/></svg>
<div style="top:454.48px;font-size:11px;line-height:11px;white-space:pre;transform:scaleY(1.13);transform-origin:0 0;letter-spacing:-0.1px;left:47.60px;">01.7.11.07-0041</div>
<div style="top:454.48px;font-size:11px;line-height:11px;white-space:pre;transform:scaleY(1.13);transform-origin:0 0;letter-spacing:0.014px;left:197.60px;">Электроды сварочные для сварки низколегированных и углеродистых сталей Э55, диаметр 4 мм</div>
<div style="top:454.48px;font-size:11px;line-height:11px;white-space:pre;transform:scaleY(1.13);transform-origin:0 0;left:1064.60px;">т</div>
<div style="top:454.48px;font-size:11px;line-height:11px;white-space:pre;transform:scaleY(1.13);transform-origin:0 0;right:674.60px;text-align:right;">0,626</div>
<div style="top:454.48px;font-size:11px;line-height:11px;white-space:pre;transform:scaleY(1.13);transform-origin:0 0;right:484.60px;text-align:right;">0,626</div>
<div style="top:454.48px;font-size:11px;line-height:11px;white-space:pre;transform:scaleY(1.13);transform-origin:0 0;right:389.60px;text-align:right;">158 259,47</div>
<div style="top:454.48px;font-size:11px;line-height:11px;white-space:pre;transform:scaleY(1.13);transform-origin:0 0;right:294.60px;text-align:right;">0,94</div>
<div style="top:454.48px;font-size:11px;line-height:11px;white-space:pre;transform:scaleY(1.13);transform-origin:0 0;right:199.60px;text-align:right;">148 763,9</div>
<div style="top:454.48px;font-size:11px;line-height:11px;white-space:pre;transform:scaleY(1.13);transform-origin:0 0;right:9.60px;text-align:right;">93 126,2</div>
<div style="left:5px;top:469px;width:1906px;height:16px;background:#fde9e9;"></div>
<svg style="left:16px;top:474px" width="16" height="7" viewBox="0 0 16 7"><rect x="5.2" y="0.2" width="5.600" height="2.900" rx="1.400" fill="#ee6a00" stroke="#c04c00" stroke-width=".5"/><rect x="6.800000000000001" y="1.3" width="3" height=".8" rx=".4" fill="#ffb050"/><rect x="2.3" y="2.1" width="5.600" height="2.900" rx="1.400" fill="#ee6a00" stroke="#c04c00" stroke-width=".5"/><rect x="3.9" y="3.2" width="3" height=".8" rx=".4" fill="#ffb050"/><rect x="7.9" y="2.1" width="5.600" height="2.900" rx="1.400" fill="#ee6a00" stroke="#c04c00" stroke-width=".5"/><rect x="9.5" y="3.2" width="3" height=".8" rx=".4" fill="#ffb050"/><rect x="0.2" y="4.1" width="5.600" height="2.900" rx="1.400" fill="#ee6a00" stroke="#c04c00" stroke-width=".5"/><rect x="1.8" y="5.199999999999999" width="3" height=".8" rx=".4" fill="#ffb050"/><rect x="5.2" y="4.1" width="5.600" height="2.900" rx="1.400" fill="#ee6a00" stroke="#c04c00" stroke-width=".5"/><rect x="6.800000000000001" y="5.199999999999999" width="3" height=".8" rx=".4" fill="#ffb050"/><rect x="10.2" y="4.1" width="5.600" height="2.900" rx="1.400" fill="#ee6a00" stroke="#c04c00" stroke-width=".5"/><rect x="11.799999999999999" y="5.199999999999999" width="3" height=".8" rx=".4" fill="#ffb050"/></svg>
<div style="top:471.48px;font-size:11px;line-height:11px;white-space:pre;transform:scaleY(1.13);transform-origin:0 0;letter-spacing:-0.066px;left:47.60px;">08.3.04.02-0003</div>
<div style="top:471.48px;font-size:11px;line-height:11px;white-space:pre;transform:scaleY(1.13);transform-origin:0 0;letter-spacing:0.046px;left:197.60px;">Прокат стальной горячекатаный круглый, марки стали Ст3сп, Ст3пс, диаметр 52-70 мм</div>
<div style="top:471.48px;font-size:11px;line-height:11px;white-space:pre;transform:scaleY(1.13);transform-origin:0 0;left:1064.60px;">т</div>
<div style="top:471.48px;font-size:11px;line-height:11px;white-space:pre;transform:scaleY(1.13);transform-origin:0 0;right:674.60px;text-align:right;">0,24</div>
<div style="top:471.48px;font-size:11px;line-height:11px;white-space:pre;transform:scaleY(1.13);transform-origin:0 0;right:484.60px;text-align:right;">0,24</div>
<div style="top:471.48px;font-size:11px;line-height:11px;white-space:pre;transform:scaleY(1.13);transform-origin:0 0;right:389.60px;text-align:right;">65 776,5</div>
<div style="top:471.48px;font-size:11px;line-height:11px;white-space:pre;transform:scaleY(1.13);transform-origin:0 0;right:294.60px;text-align:right;">0,81</div>
<div style="top:471.48px;font-size:11px;line-height:11px;white-space:pre;transform:scaleY(1.13);transform-origin:0 0;right:199.60px;text-align:right;">53 278,97</div>
<div style="top:471.48px;font-size:11px;line-height:11px;white-space:pre;transform:scaleY(1.13);transform-origin:0 0;right:9.60px;text-align:right;">12 786,95</div>
<div style="top:488.48px;font-size:11px;line-height:11px;white-space:pre;transform:scaleY(1.13);transform-origin:0 0;font-weight:bold;letter-spacing:0.754px;left:197.60px;">Итого прямые затраты</div>
<div style="top:488.48px;font-size:11px;line-height:11px;white-space:pre;transform:scaleY(1.13);transform-origin:0 0;font-weight:bold;letter-spacing:0.95px;right:8.65px;text-align:right;">2 598 465,29</div>
<div style="left:5px;top:503px;width:1906px;height:16px;background:#fde9e9;"></div>
<div style="top:505.48px;font-size:11px;line-height:11px;white-space:pre;transform:scaleY(1.13);transform-origin:0 0;left:7.50px;">4,1</div>
<svg style="left:172px;top:507px" width="16" height="7" viewBox="0 0 16 7"><rect x="5.2" y="0.2" width="5.600" height="2.900" rx="1.400" fill="#ee6a00" stroke="#c04c00" stroke-width=".5"/><rect x="6.800000000000001" y="1.3" width="3" height=".8" rx=".4" fill="#ffb050"/><rect x="2.3" y="2.1" width="5.600" height="2.900" rx="1.400" fill="#ee6a00" stroke="#c04c00" stroke-width=".5"/><rect x="3.9" y="3.2" width="3" height=".8" rx=".4" fill="#ffb050"/><rect x="7.9" y="2.1" width="5.600" height="2.900" rx="1.400" fill="#ee6a00" stroke="#c04c00" stroke-width=".5"/><rect x="9.5" y="3.2" width="3" height=".8" rx=".4" fill="#ffb050"/><rect x="0.2" y="4.1" width="5.600" height="2.900" rx="1.400" fill="#ee6a00" stroke="#c04c00" stroke-width=".5"/><rect x="1.8" y="5.199999999999999" width="3" height=".8" rx=".4" fill="#ffb050"/><rect x="5.2" y="4.1" width="5.600" height="2.900" rx="1.400" fill="#ee6a00" stroke="#c04c00" stroke-width=".5"/><rect x="6.800000000000001" y="5.199999999999999" width="3" height=".8" rx=".4" fill="#ffb050"/><rect x="10.2" y="4.1" width="5.600" height="2.900" rx="1.400" fill="#ee6a00" stroke="#c04c00" stroke-width=".5"/><rect x="11.799999999999999" y="5.199999999999999" width="3" height=".8" rx=".4" fill="#ffb050"/></svg>
<div style="top:504.48px;font-size:11px;line-height:11px;white-space:pre;transform:scaleY(1.13);transform-origin:0 0;letter-spacing:-0.127px;left:45.30px;">999-0005</div>
<div style="top:505.48px;font-size:11px;line-height:11px;white-space:pre;transform:scaleY(1.13);transform-origin:0 0;letter-spacing:0.007px;left:197.60px;">Масса оборудования</div>
<div style="top:505.48px;font-size:11px;line-height:11px;white-space:pre;transform:scaleY(1.13);transform-origin:0 0;left:1064.60px;">т</div>
<div style="top:505.48px;font-size:11px;line-height:11px;white-space:pre;transform:scaleY(1.13);transform-origin:0 0;right:674.60px;text-align:right;">119,5</div>
<div style="top:505.48px;font-size:11px;line-height:11px;white-space:pre;transform:scaleY(1.13);transform-origin:0 0;right:484.60px;text-align:right;">119,5</div>
<div style="top:505.48px;font-size:11px;line-height:11px;white-space:pre;transform:scaleY(1.13);transform-origin:0 0;right:389.60px;text-align:right;">0</div>
<div style="top:505.48px;font-size:11px;line-height:11px;white-space:pre;color:#ff0000;transform:scaleY(1.13);transform-origin:0 0;right:199.60px;text-align:right;">0</div>
<div style="top:505.48px;font-size:11px;line-height:11px;white-space:pre;transform:scaleY(1.13);transform-origin:0 0;right:9.60px;text-align:right;">0</div>
<div style="top:522.48px;font-size:11px;line-height:11px;white-space:pre;transform:scaleY(1.13);transform-origin:0 0;left:7.50px;">4,1,1</div>
<div style="top:521.48px;font-size:11px;line-height:11px;white-space:pre;color:#ff0000;transform:scaleY(1.13);transform-origin:0 0;letter-spacing:0.215px;left:45.30px;">Исключен</div>
<div style="top:534.48px;font-size:11px;line-height:11px;white-space:pre;transform:scaleY(1.13);transform-origin:0 0;letter-spacing:-0.119px;left:45.30px;">999-0005_01-</div>
<div style="top:547.48px;font-size:11px;line-height:11px;white-space:pre;transform:scaleY(1.13);transform-origin:0 0;letter-spacing:-0.196px;left:45.30px;">20-1-01-0030</div>
<div style="top:522.48px;font-size:11px;line-height:11px;white-space:pre;transform:scaleY(1.13);transform-origin:0 0;letter-spacing:0.089px;left:197.60px;">Перевозка грузов I класса бортовым автомобилем грузоподъемностью до 20 т по дорогам с усовершенствованным покрытием на расстояние 30 км</div>
<div style="top:522.48px;font-size:11px;line-height:11px;white-space:pre;transform:scaleY(1.13);transform-origin:0 0;letter-spacing:0.309px;left:1064.60px;">1 Т ГРУЗА</div>
<div style="top:522.48px;font-size:11px;line-height:11px;white-space:pre;transform:scaleY(1.13);transform-origin:0 0;right:674.60px;text-align:right;">-119,5</div>
<div style="top:522.48px;font-size:11px;line-height:11px;white-space:pre;transform:scaleY(1.13);transform-origin:0 0;right:484.60px;text-align:right;">-119,5</div>
<div style="top:522.48px;font-size:11px;line-height:11px;white-space:pre;transform:scaleY(1.13);transform-origin:0 0;right:389.60px;text-align:right;">0</div>
<div style="top:522.48px;font-size:11px;line-height:11px;white-space:pre;color:#ff0000;transform:scaleY(1.13);transform-origin:0 0;right:199.60px;text-align:right;">0</div>
<div style="top:522.48px;font-size:11px;line-height:11px;white-space:pre;transform:scaleY(1.13);transform-origin:0 0;right:9.60px;text-align:right;">0</div>
<div style="top:565.48px;font-size:11px;line-height:11px;white-space:pre;transform:scaleY(1.13);transform-origin:0 0;left:7.50px;">4,1,2</div>
<div style="top:565.48px;font-size:11px;line-height:11px;white-space:pre;transform:scaleY(1.13);transform-origin:0 0;letter-spacing:-0.119px;left:47.60px;">999-0005_01-</div>
<div style="top:578.48px;font-size:11px;line-height:11px;white-space:pre;transform:scaleY(1.13);transform-origin:0 0;letter-spacing:-0.196px;left:47.60px;">20-1-01-0060</div>
<div style="top:565.48px;font-size:11px;line-height:11px;white-space:pre;transform:scaleY(1.13);transform-origin:0 0;letter-spacing:0.089px;left:197.60px;">Перевозка грузов I класса бортовым автомобилем грузоподъемностью до 20 т по дорогам с усовершенствованным покрытием на расстояние 60 км</div>
<div style="top:565.48px;font-size:11px;line-height:11px;white-space:pre;transform:scaleY(1.13);transform-origin:0 0;letter-spacing:0.309px;left:1064.60px;">1 Т ГРУЗА</div>
<div style="top:565.48px;font-size:11px;line-height:11px;white-space:pre;transform:scaleY(1.13);transform-origin:0 0;right:674.60px;text-align:right;">119,5</div>
<div style="top:565.48px;font-size:11px;line-height:11px;white-space:pre;transform:scaleY(1.13);transform-origin:0 0;right:484.60px;text-align:right;">119,5</div>
<div style="top:565.48px;font-size:11px;line-height:11px;white-space:pre;transform:scaleY(1.13);transform-origin:0 0;right:389.60px;text-align:right;">0</div>
<div style="top:565.48px;font-size:11px;line-height:11px;white-space:pre;color:#ff0000;transform:scaleY(1.13);transform-origin:0 0;right:199.60px;text-align:right;">0</div>
<div style="top:565.48px;font-size:11px;line-height:11px;white-space:pre;transform:scaleY(1.13);transform-origin:0 0;right:9.60px;text-align:right;">0</div>
<div style="left:5px;top:593px;width:1906px;height:16px;background:#fde9e9;"></div>
<div style="top:595.48px;font-size:11px;line-height:11px;white-space:pre;transform:scaleY(1.13);transform-origin:0 0;left:7.50px;">4,2</div>
<svg style="left:172px;top:597px" width="16" height="7" viewBox="0 0 16 7"><rect x="5.2" y="0.2" width="5.600" height="2.900" rx="1.400" fill="#ee6a00" stroke="#c04c00" stroke-width=".5"/><rect x="6.800000000000001" y="1.3" width="3" height=".8" rx=".4" fill="#ffb050"/><rect x="2.3" y="2.1" width="5.600" height="2.900" rx="1.400" fill="#ee6a00" stroke="#c04c00" stroke-width=".5"/><rect x="3.9" y="3.2" width="3" height=".8" rx=".4" fill="#ffb050"/><rect x="7.9" y="2.1" width="5.600" height="2.900" rx="1.400" fill="#ee6a00" stroke="#c04c00" stroke-width=".5"/><rect x="9.5" y="3.2" width="3" height=".8" rx=".4" fill="#ffb050"/><rect x="0.2" y="4.1" width="5.600" height="2.900" rx="1.400" fill="#ee6a00" stroke="#c04c00" stroke-width=".5"/><rect x="1.8" y="5.199999999999999" width="3" height=".8" rx=".4" fill="#ffb050"/><rect x="5.2" y="4.1" width="5.600" height="2.900" rx="1.400" fill="#ee6a00" stroke="#c04c00" stroke-width=".5"/><rect x="6.800000000000001" y="5.199999999999999" width="3" height=".8" rx=".4" fill="#ffb050"/><rect x="10.2" y="4.1" width="5.600" height="2.900" rx="1.400" fill="#ee6a00" stroke="#c04c00" stroke-width=".5"/><rect x="11.799999999999999" y="5.199999999999999" width="3" height=".8" rx=".4" fill="#ffb050"/></svg>
<div style="top:594.48px;font-size:11px;line-height:11px;white-space:pre;transform:scaleY(1.13);transform-origin:0 0;letter-spacing:0.048px;left:45.30px;">Пр/421-75-а</div>
<div style="top:595.48px;font-size:11px;line-height:11px;white-space:pre;transform:scaleY(1.13);transform-origin:0 0;letter-spacing:-0.019px;left:197.60px;">Вспомогательные ненормируемые материалы (2% от ОЗП)</div>
<div style="top:595.48px;font-size:11px;line-height:11px;white-space:pre;transform:scaleY(1.13);transform-origin:0 0;left:1064.60px;">%</div>
<div style="top:595.48px;font-size:11px;line-height:11px;white-space:pre;transform:scaleY(1.13);transform-origin:0 0;right:674.60px;text-align:right;">2</div>
<div style="top:595.48px;font-size:11px;line-height:11px;white-space:pre;transform:scaleY(1.13);transform-origin:0 0;right:484.60px;text-align:right;">2</div>
<div style="top:595.48px;font-size:11px;line-height:11px;white-space:pre;transform:scaleY(1.13);transform-origin:0 0;right:9.60px;text-align:right;">26 949,22</div>
<div style="left:5px;top:895px;width:1906px;height:16px;background:#ffffe1;"></div>
<div style="top:897.48px;font-size:11px;line-height:11px;white-space:pre;transform:scaleY(1.13);transform-origin:0 0;font-weight:bold;letter-spacing:1.769px;left:197.60px;">ФОТ</div>
<div style="top:897.48px;font-size:11px;line-height:11px;white-space:pre;transform:scaleY(1.13);transform-origin:0 0;font-weight:bold;letter-spacing:0.95px;right:8.65px;text-align:right;">1 710 947,6</div>
<div style="left:5px;top:912px;width:1906px;height:16px;background:#ffffe1;"></div>
<div style="top:914.48px;font-size:11px;line-height:11px;white-space:pre;transform:scaleY(1.13);transform-origin:0 0;font-weight:bold;letter-spacing:1.015px;left:47.60px;">Пр/812-050.0-1</div>
<div style="top:914.48px;font-size:11px;line-height:11px;white-space:pre;transform:scaleY(1.13);transform-origin:0 0;font-weight:bold;letter-spacing:0.71px;left:197.60px;">НР: Электрические печи</div>
<div style="top:914.48px;font-size:11px;line-height:11px;white-space:pre;transform:scaleY(1.13);transform-origin:0 0;font-weight:bold;letter-spacing:0.4px;left:1064.60px;">%</div>
<div style="top:914.48px;font-size:11px;line-height:11px;white-space:pre;transform:scaleY(1.13);transform-origin:0 0;font-weight:bold;letter-spacing:0.95px;right:673.65px;text-align:right;">91</div>
<div style="top:914.48px;font-size:11px;line-height:11px;white-space:pre;transform:scaleY(1.13);transform-origin:0 0;font-weight:bold;letter-spacing:0.95px;right:483.65px;text-align:right;">91</div>
<div style="top:914.48px;font-size:11px;line-height:11px;white-space:pre;transform:scaleY(1.13);transform-origin:0 0;font-weight:bold;letter-spacing:0.95px;right:8.65px;text-align:right;">1 556 962,32</div>
<div style="left:5px;top:929px;width:1906px;height:16px;background:#ffffe1;"></div>
<div style="top:931.48px;font-size:11px;line-height:11px;white-space:pre;transform:scaleY(1.13);transform-origin:0 0;font-weight:bold;letter-spacing:1.18px;left:47.60px;">Пр/774-050.0</div>
<div style="top:931.48px;font-size:11px;line-height:11px;white-space:pre;transform:scaleY(1.13);transform-origin:0 0;font-weight:bold;letter-spacing:0.676px;left:197.60px;">СП: Электрические печи</div>
<div style="top:931.48px;font-size:11px;line-height:11px;white-space:pre;transform:scaleY(1.13);transform-origin:0 0;font-weight:bold;letter-spacing:0.4px;left:1064.60px;">%</div>
<div style="top:931.48px;font-size:11px;line-height:11px;white-space:pre;transform:scaleY(1.13);transform-origin:0 0;font-weight:bold;letter-spacing:0.95px;right:673.65px;text-align:right;">48</div>
<div style="top:931.48px;font-size:11px;line-height:11px;white-space:pre;transform:scaleY(1.13);transform-origin:0 0;font-weight:bold;letter-spacing:0.95px;right:483.65px;text-align:right;">48</div>
<div style="top:931.48px;font-size:11px;line-height:11px;white-space:pre;transform:scaleY(1.13);transform-origin:0 0;font-weight:bold;letter-spacing:0.95px;right:8.65px;text-align:right;">821 254,85</div>
<div style="left:5px;top:946px;width:1906px;height:16px;background:#ffffe1;"></div>
<div style="top:948.48px;font-size:11px;line-height:11px;white-space:pre;transform:scaleY(1.13);transform-origin:0 0;font-weight:bold;letter-spacing:0.624px;left:197.60px;">Всего по позиции:</div>
<div style="top:948.48px;font-size:11px;line-height:11px;white-space:pre;transform:scaleY(1.13);transform-origin:0 0;font-weight:bold;letter-spacing:0.95px;right:198.65px;text-align:right;">5 003 631,68</div>
<div style="top:948.48px;font-size:11px;line-height:11px;white-space:pre;transform:scaleY(1.13);transform-origin:0 0;font-weight:bold;letter-spacing:0.95px;right:8.65px;text-align:right;">5 003 631,68</div>
<div style="left:4px;top:229px;width:1908px;height:1px;background:#a8a8a8;"></div>
<div style="left:4px;top:247px;width:1908px;height:1px;background:#a8a8a8;"></div>
<div style="left:4px;top:264px;width:1908px;height:1px;background:#a8a8a8;"></div>
<div style="left:4px;top:281px;width:1908px;height:1px;background:#a8a8a8;"></div>
<div style="left:4px;top:298px;width:1908px;height:1px;background:#a8a8a8;"></div>
<div style="left:4px;top:315px;width:1908px;height:1px;background:#a8a8a8;"></div>
<div style="left:4px;top:332px;width:1908px;height:1px;background:#a8a8a8;"></div>
<div style="left:4px;top:349px;width:1908px;height:1px;background:#a8a8a8;"></div>
<div style="left:4px;top:366px;width:1908px;height:1px;background:#a8a8a8;"></div>
<div style="left:4px;top:383px;width:1908px;height:1px;background:#a8a8a8;"></div>
<div style="left:4px;top:400px;width:1908px;height:1px;background:#a8a8a8;"></div>
<div style="left:4px;top:417px;width:1908px;height:1px;background:#a8a8a8;"></div>
<div style="left:4px;top:434px;width:1908px;height:1px;background:#a8a8a8;"></div>
<div style="left:4px;top:451px;width:1908px;height:1px;background:#a8a8a8;"></div>
<div style="left:4px;top:468px;width:1908px;height:1px;background:#a8a8a8;"></div>
<div style="left:4px;top:485px;width:1908px;height:1px;background:#a8a8a8;"></div>
<div style="left:4px;top:502px;width:1908px;height:1px;background:#a8a8a8;"></div>
<div style="left:4px;top:519px;width:1908px;height:1px;background:#a8a8a8;"></div>
<div style="left:4px;top:562px;width:1908px;height:1px;background:#a8a8a8;"></div>
<div style="left:4px;top:592px;width:1908px;height:1px;background:#a8a8a8;"></div>
<div style="left:4px;top:609px;width:1908px;height:1px;background:#a8a8a8;"></div>
<div style="left:4px;top:911px;width:1908px;height:1px;background:#a8a8a8;"></div>
<div style="left:4px;top:928px;width:1908px;height:1px;background:#a8a8a8;"></div>
<div style="left:4px;top:945px;width:1908px;height:1px;background:#a8a8a8;"></div>
<div style="left:4px;top:962px;width:1908px;height:1px;background:#a8a8a8;"></div>
<div style="left:4px;top:894px;width:1908px;height:1px;background:#a8a8a8;"></div>
<div style="left:44px;top:212px;width:1px;height:398px;background:#a8a8a8;"></div>
<div style="left:44px;top:894px;width:1px;height:69px;background:#a8a8a8;"></div>
<div style="left:194px;top:212px;width:1px;height:398px;background:#a8a8a8;"></div>
<div style="left:194px;top:894px;width:1px;height:69px;background:#a8a8a8;"></div>
<div style="left:1061px;top:212px;width:1px;height:398px;background:#a8a8a8;"></div>
<div style="left:1061px;top:894px;width:1px;height:69px;background:#a8a8a8;"></div>
<div style="left:1151px;top:212px;width:1px;height:398px;background:#a8a8a8;"></div>
<div style="left:1151px;top:894px;width:1px;height:69px;background:#a8a8a8;"></div>
<div style="left:1246px;top:212px;width:1px;height:398px;background:#a8a8a8;"></div>
<div style="left:1246px;top:894px;width:1px;height:69px;background:#a8a8a8;"></div>
<div style="left:1341px;top:212px;width:1px;height:398px;background:#a8a8a8;"></div>
<div style="left:1341px;top:894px;width:1px;height:69px;background:#a8a8a8;"></div>
<div style="left:1436px;top:212px;width:1px;height:398px;background:#a8a8a8;"></div>
<div style="left:1436px;top:894px;width:1px;height:69px;background:#a8a8a8;"></div>
<div style="left:1531px;top:212px;width:1px;height:398px;background:#a8a8a8;"></div>
<div style="left:1531px;top:894px;width:1px;height:69px;background:#a8a8a8;"></div>
<div style="left:1626px;top:212px;width:1px;height:398px;background:#a8a8a8;"></div>
<div style="left:1626px;top:894px;width:1px;height:69px;background:#a8a8a8;"></div>
<div style="left:1721px;top:212px;width:1px;height:398px;background:#a8a8a8;"></div>
<div style="left:1721px;top:894px;width:1px;height:69px;background:#a8a8a8;"></div>
<div style="left:1816px;top:212px;width:1px;height:398px;background:#a8a8a8;"></div>
<div style="left:1816px;top:894px;width:1px;height:69px;background:#a8a8a8;"></div>
<div style="left:1911px;top:212px;width:1px;height:398px;background:#a8a8a8;"></div>
<div style="left:1911px;top:894px;width:1px;height:69px;background:#a8a8a8;"></div>
<div style="left:44px;top:230px;width:1px;height:2px;background:#fff;"></div>
<div style="left:194px;top:230px;width:1px;height:2px;background:#fff;"></div>
<div style="left:1061px;top:230px;width:1px;height:2px;background:#fff;"></div>
<div style="left:1151px;top:230px;width:1px;height:2px;background:#fff;"></div>
<div style="left:1246px;top:230px;width:1px;height:2px;background:#fff;"></div>
<div style="left:1341px;top:230px;width:1px;height:2px;background:#fff;"></div>
<div style="left:1436px;top:230px;width:1px;height:2px;background:#fff;"></div>
<div style="left:1531px;top:230px;width:1px;height:2px;background:#fff;"></div>
<div style="left:1626px;top:230px;width:1px;height:2px;background:#fff;"></div>
<div style="left:1721px;top:230px;width:1px;height:2px;background:#fff;"></div>
<div style="left:1816px;top:230px;width:1px;height:2px;background:#fff;"></div>
<div style="left:2px;top:963px;width:1914px;height:1px;background:#e3e3e3;"></div>
<div style="left:2px;top:964px;width:1916px;height:1px;background:#696969;"></div>
<div style="left:2px;top:965px;width:1916px;height:1px;background:#a0a0a0;"></div>
<div style="left:2px;top:966px;width:73px;height:18px;background:#f0f0f0;"></div>
<div style="left:2px;top:966px;width:1px;height:16px;background:#ffffff;"></div>
<div style="left:74px;top:966px;width:1px;height:16px;background:#696969;"></div>
<div style="left:73px;top:966px;width:1px;height:16px;background:#a0a0a0;"></div>
<div style="left:4px;top:983px;width:69px;height:1px;background:#696969;"></div>
<div style="left:3px;top:982px;width:70px;height:1px;background:#a0a0a0;"></div>
<div style="left:73px;top:982px;width:1px;height:1px;background:#696969;"></div>
<div style="top:970.48px;font-size:11px;line-height:11px;white-space:pre;transform:scaleY(1.13);transform-origin:0 0;letter-spacing:-0.065px;left:9.00px;">Полный вид</div>
<div style="left:75px;top:966px;width:110px;height:18px;background:#f0f0f0;"></div>
<div style="left:75px;top:966px;width:1px;height:16px;background:#ffffff;"></div>
<div style="left:184px;top:966px;width:1px;height:16px;background:#696969;"></div>
<div style="left:183px;top:966px;width:1px;height:16px;background:#a0a0a0;"></div>
<div style="left:77px;top:983px;width:106px;height:1px;background:#696969;"></div>
<div style="left:76px;top:982px;width:107px;height:1px;background:#a0a0a0;"></div>
<div style="left:183px;top:982px;width:1px;height:1px;background:#696969;"></div>
<div style="top:970.48px;font-size:11px;line-height:11px;white-space:pre;transform:scaleY(1.13);transform-origin:0 0;letter-spacing:-0.044px;left:82.00px;">Сокращенный вид</div>
<div style="left:254px;top:966px;width:99px;height:18px;background:#f0f0f0;"></div>
<div style="left:254px;top:966px;width:1px;height:16px;background:#ffffff;"></div>
<div style="left:352px;top:966px;width:1px;height:16px;background:#696969;"></div>
<div style="left:351px;top:966px;width:1px;height:16px;background:#a0a0a0;"></div>
<div style="left:256px;top:983px;width:95px;height:1px;background:#696969;"></div>
<div style="left:255px;top:982px;width:96px;height:1px;background:#a0a0a0;"></div>
<div style="left:351px;top:982px;width:1px;height:1px;background:#696969;"></div>
<div style="top:970.48px;font-size:11px;line-height:11px;white-space:pre;transform:scaleY(1.13);transform-origin:0 0;letter-spacing:0.121px;left:259.00px;">Объектная смета</div>
<div style="left:355px;top:966px;width:86px;height:18px;background:#f0f0f0;"></div>
<div style="left:355px;top:966px;width:1px;height:16px;background:#ffffff;"></div>
<div style="left:440px;top:966px;width:1px;height:16px;background:#696969;"></div>
<div style="left:439px;top:966px;width:1px;height:16px;background:#a0a0a0;"></div>
<div style="left:357px;top:983px;width:82px;height:1px;background:#696969;"></div>
<div style="left:356px;top:982px;width:83px;height:1px;background:#a0a0a0;"></div>
<div style="left:439px;top:982px;width:1px;height:1px;background:#696969;"></div>
<div style="top:970.48px;font-size:11px;line-height:11px;white-space:pre;transform:scaleY(1.13);transform-origin:0 0;letter-spacing:0.055px;left:361.00px;">Предпросмотр</div>
<div style="left:183px;top:964px;width:71px;height:22px;background:#f0f0f0;"></div>
<div style="left:183px;top:964px;width:1px;height:20px;background:#ffffff;"></div>
<div style="left:253px;top:964px;width:1px;height:20px;background:#696969;"></div>
<div style="left:252px;top:964px;width:1px;height:20px;background:#a0a0a0;"></div>
<div style="left:185px;top:985px;width:67px;height:1px;background:#696969;"></div>
<div style="left:184px;top:984px;width:68px;height:1px;background:#a0a0a0;"></div>
<div style="left:252px;top:984px;width:1px;height:1px;background:#696969;"></div>
<div style="top:971.48px;font-size:11px;line-height:11px;white-space:pre;transform:scaleY(1.13);transform-origin:0 0;letter-spacing:0.169px;left:190.00px;">Вид строки</div>
<div style="left:1px;top:986px;width:1916px;height:1px;background:#a0a0a0;"></div>
<div style="left:1px;top:987px;width:1916px;height:32px;background:#ffffff;"></div>
<div style="left:3px;top:992px;width:84px;height:25px;background:#f0f0f0;box-sizing:border-box;border-top:1px solid #a0a0a0;border-left:1px solid #a0a0a0;"></div>
<div style="left:92px;top:992px;width:295px;height:25px;background:#f0f0f0;box-sizing:border-box;border-top:1px solid #a0a0a0;border-left:1px solid #a0a0a0;"></div>
<div style="left:392px;top:992px;width:1456px;height:25px;background:#f0f0f0;box-sizing:border-box;border-top:1px solid #a0a0a0;border-left:1px solid #a0a0a0;"></div>
<div style="left:1853px;top:992px;width:29px;height:25px;background:#f0f0f0;box-sizing:border-box;border-top:1px solid #a0a0a0;border-left:1px solid #a0a0a0;"></div>
<div style="left:1887px;top:992px;width:29px;height:25px;background:#f0f0f0;box-sizing:border-box;border-top:1px solid #a0a0a0;border-left:1px solid #a0a0a0;"></div>
<div style="left:89px;top:990px;width:1px;height:29px;background:#a0a0a0;"></div>
<div style="left:389px;top:990px;width:1px;height:29px;background:#a0a0a0;"></div>
<div style="left:1850px;top:990px;width:1px;height:29px;background:#a0a0a0;"></div>
<div style="left:1884px;top:990px;width:1px;height:29px;background:#a0a0a0;"></div>
<div style="top:998.84px;font-size:12px;line-height:12px;white-space:pre;letter-spacing:-0.046px;left:396.28px;">ИТОГО (руб)</div>
<div style="top:998.84px;font-size:12px;line-height:12px;white-space:pre;letter-spacing:-0.422px;left:473.28px;">По ЛС: 5 149 038,15</div>
<div style="top:998.84px;font-size:12px;line-height:12px;white-space:pre;letter-spacing:-0.278px;left:591.28px;">По объекту: 5 149 038,15</div>
<div style="top:998.84px;font-size:12px;line-height:12px;white-space:pre;letter-spacing:-0.024px;left:1892.28px;">RU</div>
<svg style="left:1860px;top:997px" width="17" height="17" viewBox="0 0 17 17"><rect x="0" y="0.500" width="16" height="16" rx="5" fill="#9c9c9c"/><rect x="7" y="3.500" width="2.500" height="2.500" fill="#e4e4e4"/><rect x="7" y="7.500" width="2.500" height="6" fill="#e4e4e4"/><path d="M0 0l16.500 16.500" stroke="#ff0000" stroke-width="2"/></svg>
<div style="left:1156px;top:28px;width:111px;height:32px;background:transparent;box-sizing:border-box;border:3px solid #ff0000;"></div>
<svg style="left:0;top:0" width="1919" height="1021" viewBox="0 0 1919 1021"><path d="M1021 152.500L1140 71.500" stroke="#ff0000" stroke-width="3.400" fill="none"/><path d="M1157.500 59.500L1134 66L1142.500 79z" fill="#ff0000"/></svg>
<div style="left:0px;top:0px;width:1px;height:1021px;background:#8c8c8c;"></div>
<div style="left:0px;top:1019px;width:1919px;height:2px;background:#7a7a7a;"></div>
</body></html>
